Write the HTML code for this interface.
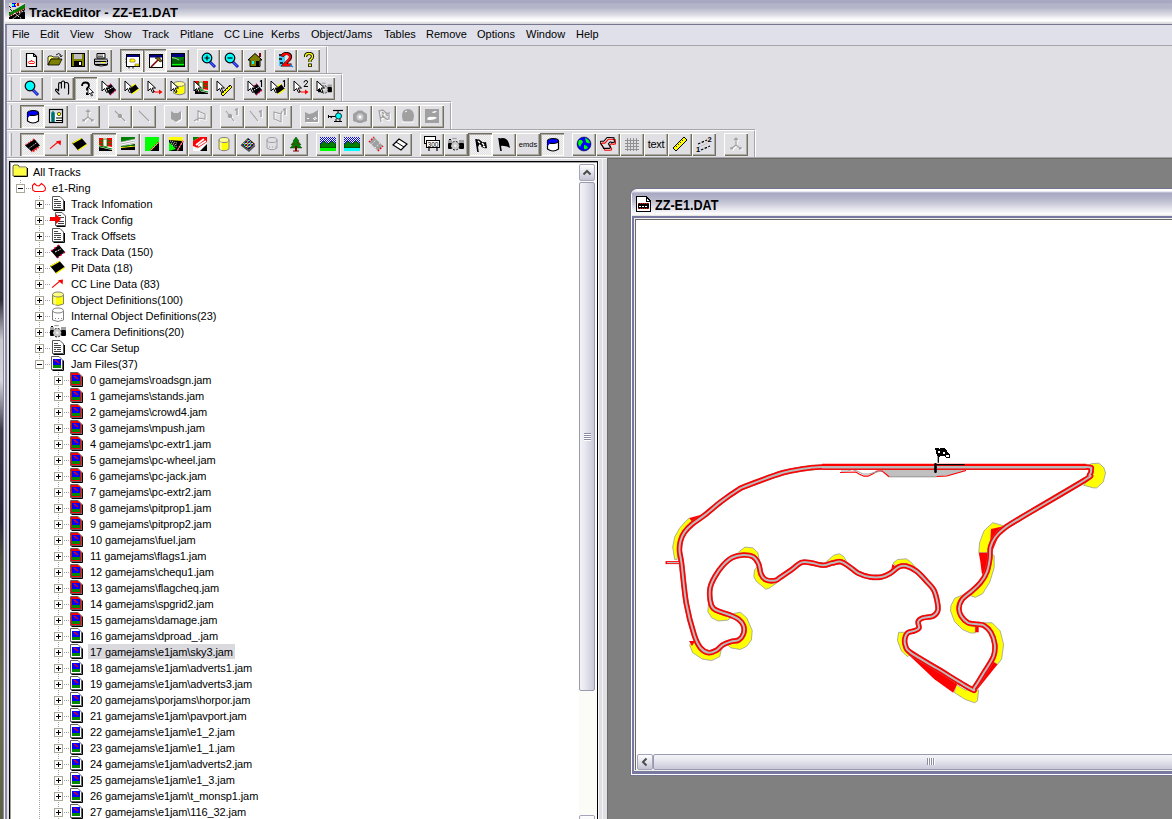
<!DOCTYPE html><html><head><meta charset="utf-8"><style>
*{margin:0;padding:0;box-sizing:border-box}
html,body{width:1172px;height:819px;overflow:hidden;background:#e0dfe3;font-family:'Liberation Sans', sans-serif;font-size:11px;color:#000}
.a{position:absolute}
.btn{position:absolute;box-shadow:inset 1px 1px #fffff6,inset -1px -1px #716f64,inset -2px -2px #aca9a0}
.btn svg{position:absolute;left:4px;top:3px}
.prs{position:absolute;box-shadow:inset 1px 1px #716f64,inset 2px 2px #aca9a0,inset -1px -1px #fffff6;background-color:#f4f4f2;background-image:linear-gradient(45deg,#e0dfe3 25%,transparent 25%,transparent 75%,#e0dfe3 75%),linear-gradient(45deg,#e0dfe3 25%,transparent 25%,transparent 75%,#e0dfe3 75%);background-size:2px 2px;background-position:0 0,1px 1px}
.prs svg{position:absolute;left:5px;top:4px}
.grip{position:absolute;width:3px;box-shadow:inset 1px 1px #fff,inset -1px -1px #a0a0a0}
.band{position:absolute;box-shadow:inset -1px 0 #a0a0a0, inset -2px 0 #fff}
.menu span{position:absolute;top:3px;white-space:nowrap}
.tree div{position:absolute;white-space:nowrap;height:16px;line-height:16px}
</style></head><body><div class="a" style="left:0;top:0;width:3px;height:819px;background:linear-gradient(#55585c 0,#3c4044 120px,#2a2e33 300px,#c9c9cc 340px,#d8d8dc 380px,#3b3c48 430px,#242633 520px,#4c5036 560px,#6c6e4a 700px,#5e6140 819px)"></div><div class="a" style="left:3px;top:0;width:1169px;height:819px;background:#8a8aa8"></div><div class="a" style="left:4px;top:0;width:1px;height:819px;background:#f4f4f8"></div><div class="a" style="left:5px;top:0;width:1167px;height:24px;background:linear-gradient(#aaa8c2 0,#a7a6c0 2px,#b2b2c8 4px,#b6b6ca 8px,#c6c8d5 11px,#dcdce4 15px,#f4f4f8 18px,#fff 20px,#fff 21px,#d8d8dc 23px)"></div><div class="a" style="left:5px;top:24px;width:1167px;height:1px;background:#77768f"></div><div class="a" style="left:9px;top:3px;width:16px;height:16px;overflow:hidden"><svg width="16" height="16" viewBox="0 0 16 16"><rect width="16" height="16" fill="#000"/><path d="M0 0 H16 V1 L0 11 Z" fill="#d8d8d8"/><path d="M0 3 L2 5 M1 6 L3 8 M0 9 L1 10 M4 7 L5 8" stroke="#000" stroke-width="0.9"/><rect x="3" y="0" width="4" height="4" fill="#0000ff"/><rect x="3" y="1" width="2" height="2" fill="#00ffff"/><rect x="6" y="1" width="3" height="1.5" fill="#ffff00"/><rect x="8" y="0" width="2" height="3" fill="#ff0000"/><rect x="1" y="0" width="1" height="1" fill="#ff0"/><path d="M0 10 L16 1 V5 L0 13 Z" fill="#008000"/><path d="M0 13.5 L16 5.5" stroke="#fff" stroke-width="1.1" stroke-dasharray="1 1.2"/><path d="M0 13.5 L16 5.5" stroke="#f00" stroke-width="1.1" stroke-dasharray="1 1.2" stroke-dashoffset="1.1"/><path d="M3.5 16 L12 10 M5 10 L13 16 M10 9.5 L16 8" stroke="#fff" stroke-width="1" stroke-dasharray="1.5 1"/></svg></div><div class="a" style="left:29px;top:5px;font:bold 13.5px 'Liberation Sans', sans-serif;color:#000;white-space:nowrap;transform:scaleX(0.965);transform-origin:0 0">TrackEditor - ZZ-E1.DAT</div><div class="a" style="left:7px;top:25px;width:1165px;height:20px;background:#dfe0ea"></div><div class="a" style="left:7px;top:45px;width:1165px;height:1px;background:#a7a6aa"></div><div class="a" style="left:7px;top:46px;width:1165px;height:1px;background:#fff"></div><div class="a menu" style="left:0;top:25px;width:1172px;height:20px"><span style="left:12px">File</span><span style="left:40px">Edit</span><span style="left:70px">View</span><span style="left:104px">Show</span><span style="left:142px">Track</span><span style="left:180px">Pitlane</span><span style="left:224px">CC Line</span><span style="left:271px">Kerbs</span><span style="left:311px">Object/Jams</span><span style="left:384px">Tables</span><span style="left:426px">Remove</span><span style="left:477px">Options</span><span style="left:526px">Window</span><span style="left:576px">Help</span></div><div class="a" style="left:7px;top:46px;width:1165px;height:112px;background:#e0dfe3"></div><div class="a" style="left:7px;top:45px;width:320px;height:1px;background:#a7a6aa"></div><div class="a" style="left:7px;top:46px;width:319px;height:1px;background:#fff"></div><div class="a" style="left:326px;top:47px;width:1px;height:26px;background:#a7a6aa"></div><div class="a" style="left:327px;top:46px;width:1px;height:27px;background:#fff"></div><div class="a" style="left:9px;top:49px;width:1px;height:23px;background:#fff"></div><div class="a" style="left:11px;top:49px;width:1px;height:23px;background:#a7a6aa"></div><div class="btn" style="left:20px;top:49px;width:23px;height:23px"><svg width="16" height="16" viewBox="0 0 16 16"><path d="M2.5 1.5 H9.5 L12.5 4.5 V14.5 H2.5 Z" fill="#fff" stroke="#000" stroke-width="1.2"/><path d="M9.5 1.5 V4.5 H12.5" fill="none" stroke="#000"/><path d="M4.5 10.5 L5.5 9 L6.5 10 L7.5 8 L8.5 10 L9.5 9 L10.5 10.5 L10 11.5 H5 Z" fill="none" stroke="#f00" stroke-width="0.9"/></svg></div><div class="btn" style="left:43px;top:49px;width:23px;height:23px"><svg width="16" height="16" viewBox="0 0 16 16"><path d="M1 5 L2 4 L5 4 L6 5 L12 5 L12 7 L4 7 L1 13 Z" fill="#ffff80" stroke="#000" stroke-width="0.8"/><path d="M4 7 L15 7 L12 13 L1 13 Z" fill="#808000" stroke="#000" stroke-width="0.8"/><path d="M9 3 Q12 0 14 3 L14 4" fill="none" stroke="#000" stroke-width="0.9"/><path d="M12.5 3.5 L14 5 L15.5 3.5" fill="none" stroke="#000" stroke-width="0.8"/></svg></div><div class="btn" style="left:66px;top:49px;width:23px;height:23px"><svg width="16" height="16" viewBox="0 0 16 16"><rect x="1.5" y="1.5" width="13" height="13" fill="#808000" stroke="#000"/><rect x="4" y="2" width="8" height="5" fill="#c0c0c0"/><rect x="4" y="9" width="8" height="5.5" fill="#000"/><rect x="9" y="10" width="2" height="3" fill="#fff"/></svg></div><div class="btn" style="left:89px;top:49px;width:23px;height:23px"><svg width="16" height="16" viewBox="0 0 16 16"><path d="M4 1.5 H12 V6 H4 Z" fill="#fff" stroke="#000"/><path d="M5 3 H10 M5 4.5 H10" stroke="#000" stroke-width="0.6"/><path d="M1.5 7 H14.5 V12.5 H1.5 Z" fill="#c0c0c0" stroke="#000"/><path d="M1.5 9.5 H14.5" stroke="#000"/><rect x="8" y="10" width="4" height="1" fill="#ff0"/><path d="M2 13 Q8 15 14.5 13" fill="none" stroke="#000"/><path d="M13 6 L15 8 M13 9 L15 11" stroke="#808080"/></svg></div><div class="prs" style="left:120px;top:49px;width:23px;height:23px"><svg width="16" height="16" viewBox="0 0 16 16"><rect x="1.5" y="1.5" width="13" height="12" fill="#fff" stroke="#000"/><rect x="2" y="2" width="12" height="2" fill="#000080"/><path d="M5 6 H9 L10 7 V9 H5 Z" fill="#ff0" stroke="#806000" stroke-width="0.6"/><path d="M10 11 H14 V13 H10 Z" fill="#ff0" stroke="#806000" stroke-width="0.6"/><path d="M0.5 6 H2 M0.5 9 H2 M4 13.5 V15.5 M8 13.5 V15.5" stroke="#000"/></svg></div><div class="prs" style="left:143px;top:49px;width:23px;height:23px"><svg width="16" height="16" viewBox="0 0 16 16"><rect x="1.5" y="1.5" width="13" height="13" fill="#fff" stroke="#000"/><rect x="2" y="2" width="12" height="2.5" fill="#000080"/><path d="M3 14 L10 7" stroke="#800000" stroke-width="1.6"/><path d="M7 5 L11 4 L14 8 L12 9 L10 7 Z" fill="#806000" stroke="#000" stroke-width="0.6"/></svg></div><div class="btn" style="left:166px;top:49px;width:23px;height:23px"><svg width="16" height="16" viewBox="0 0 16 16"><rect x="1.5" y="1.5" width="13" height="13" fill="#008000" stroke="#000"/><rect x="2" y="2" width="12" height="3" fill="#000080"/><path d="M2 8 L6 6 L10 9 L14 6 V14 H2 Z" fill="#006000"/><path d="M2 12.5 H14" stroke="#00ff00" stroke-width="1.2"/><path d="M2 5.5 L6 6.5 L9 8" stroke="#fff" stroke-width="0.7"/></svg></div><div class="btn" style="left:197px;top:49px;width:23px;height:23px"><svg width="16" height="16" viewBox="0 0 16 16"><path d="M8.5 9.5 L14 15" stroke="#0000a0" stroke-width="2.8"/><path d="M8.5 9.5 L13.5 14.5" stroke="#4060ff" stroke-width="1.4"/><circle cx="6" cy="6" r="4.8" fill="#00ffff" stroke="#000" stroke-width="1.2"/><path d="M3.5 6 H8.5 M6 3.5 V8.5" stroke="#000" stroke-width="1.2"/></svg></div><div class="btn" style="left:220px;top:49px;width:23px;height:23px"><svg width="16" height="16" viewBox="0 0 16 16"><path d="M8.5 9.5 L14 15" stroke="#0000a0" stroke-width="2.8"/><path d="M8.5 9.5 L13.5 14.5" stroke="#4060ff" stroke-width="1.4"/><circle cx="6" cy="6" r="4.8" fill="#00ffff" stroke="#000" stroke-width="1.2"/><path d="M3.5 6 H8.5" stroke="#000" stroke-width="1.2"/></svg></div><div class="btn" style="left:243px;top:49px;width:23px;height:23px"><svg width="16" height="16" viewBox="0 0 16 16"><path d="M8 1.5 L15 8 H13 V14.5 H3 V8 H1 Z" fill="#808000" stroke="#000"/><rect x="12" y="1" width="2" height="4" fill="#800000"/><rect x="5" y="9" width="2" height="3" fill="#00ffff"/><rect x="9" y="9" width="3" height="5" fill="#000"/></svg></div><div class="btn" style="left:274px;top:49px;width:23px;height:23px"><svg width="16" height="16" viewBox="0 0 16 16"><rect x="1" y="2" width="6" height="12" fill="#00c0ff" opacity="0.7"/><path d="M1 3 L4 3 M1 7 L4 7 M2 11 L5 11" stroke="#000" stroke-width="1.5"/><path d="M4 4.5 Q5 1 9.5 1.5 Q14 2.5 12 7 L6 13 H13.5" fill="none" stroke="#000" stroke-width="3"/><path d="M4 4.5 Q5 1.5 9.5 2 Q13 3 11.5 7 L6 13 H13" fill="none" stroke="#f00" stroke-width="2.2"/><path d="M12 13 L15 15" stroke="#0080ff" stroke-width="1.3"/></svg></div><div class="btn" style="left:297px;top:49px;width:23px;height:23px"><svg width="16" height="16" viewBox="0 0 16 16"><path d="M4.5 5 Q4.5 1.5 8 1.5 Q11.5 1.5 11.5 4.5 Q11.5 6.5 9 8 V10" fill="none" stroke="#000" stroke-width="3.2"/><path d="M4.5 5 Q4.5 1.5 8 1.5 Q11.5 1.5 11.5 4.5 Q11.5 6.5 9 8 V10" fill="none" stroke="#ff0" stroke-width="1.4"/><rect x="7.2" y="11.5" width="3.6" height="3.5" fill="#000"/><rect x="8" y="12.3" width="2" height="2" fill="#ff0"/></svg></div><div class="a" style="left:7px;top:73px;width:335px;height:1px;background:#a7a6aa"></div><div class="a" style="left:7px;top:74px;width:334px;height:1px;background:#fff"></div><div class="a" style="left:341px;top:75px;width:1px;height:26px;background:#a7a6aa"></div><div class="a" style="left:342px;top:74px;width:1px;height:27px;background:#fff"></div><div class="a" style="left:9px;top:77px;width:1px;height:23px;background:#fff"></div><div class="a" style="left:11px;top:77px;width:1px;height:23px;background:#a7a6aa"></div><div class="btn" style="left:20px;top:77px;width:23px;height:23px"><svg width="16" height="16" viewBox="0 0 16 16"><path d="M8.5 9.5 L14 15" stroke="#0000a0" stroke-width="2.8"/><path d="M8.5 9.5 L13.5 14.5" stroke="#4060ff" stroke-width="1.4"/><circle cx="6" cy="6" r="4.8" fill="#00ffff" stroke="#000" stroke-width="1.2"/></svg></div><div class="btn" style="left:51px;top:77px;width:23px;height:23px"><svg width="16" height="16" viewBox="0 0 16 16"><path d="M4.5 14.5 L0.8 10.8 Q0 9.8 1.3 9 L3.6 10.8 V4 Q3.6 2.6 5 2.6 Q6.4 2.6 6.4 4 V2.4 Q6.8 1 8.2 1 Q9.6 1 9.6 2.4 V3 Q10.6 2.2 11.8 2.6 Q13.6 3.2 13.6 5 V13.5 L13 14.5 M6.4 4 V8.5 M9.6 3 V8.5 M3.6 4 V9" fill="none" stroke="#000" stroke-width="1.1" stroke-linejoin="round"/></svg></div><div class="prs" style="left:74px;top:77px;width:23px;height:23px"><svg width="16" height="16" viewBox="0 0 16 16"><path d="M3 5 Q3 1.5 6.5 1.5 Q10 1.5 10 4.5 Q10 6 8 7.5 V9.5" fill="none" stroke="#000" stroke-width="1.8"/><rect x="7" y="11.5" width="2" height="2.5" fill="#000"/><path d="M9 6 L9 14 L11 12 L12.5 15 L13.5 14.5 L12.3 11.5 L14.5 11.5 Z" fill="#fff" stroke="#000" stroke-width="0.8"/></svg></div><div class="btn" style="left:97px;top:77px;width:23px;height:23px"><svg width="16" height="16" viewBox="0 0 16 16"><path d="M4 8 L10 4 L15 10 L9 15 Z" fill="#000"/><path d="M4 8 L10 4" stroke="#f00" stroke-width="1.6" stroke-dasharray="1.5 1.5"/><path d="M9 15 L15 10" stroke="#f00" stroke-width="1.6" stroke-dasharray="1.5 1.5"/><path d="M4.5 8.5 L10 4.5 M9 14.5 L14.5 10" stroke="#00f" stroke-width="1" stroke-dasharray="1 2"/><path d="M7 10 L12 7" stroke="#fff" stroke-dasharray="1.5 1"/><path d="M1 1 L1 11 L3.5 8.5 L5.5 12.5 L7 12 L5.2 8 L8.5 8 Z" fill="#fff" stroke="#000" stroke-width="1" stroke-linejoin="round"/></svg></div><div class="btn" style="left:120px;top:77px;width:23px;height:23px"><svg width="16" height="16" viewBox="0 0 16 16"><path d="M4 9 L11 4 L15 9 L8 14 Z" fill="#000"/><path d="M4 9 L11 4 M8 14 L15 9" stroke="#ff0" stroke-width="1.5"/><path d="M1 1 L1 11 L3.5 8.5 L5.5 12.5 L7 12 L5.2 8 L8.5 8 Z" fill="#fff" stroke="#000" stroke-width="1" stroke-linejoin="round"/></svg></div><div class="btn" style="left:143px;top:77px;width:23px;height:23px"><svg width="16" height="16" viewBox="0 0 16 16"><path d="M4 9 L8 12 H13" fill="none" stroke="#f00" stroke-width="1.2"/><path d="M12 9.5 L15.5 12 L12 14.5 Z" fill="#f00"/><path d="M1 1 L1 11 L3.5 8.5 L5.5 12.5 L7 12 L5.2 8 L8.5 8 Z" fill="#fff" stroke="#000" stroke-width="1" stroke-linejoin="round"/></svg></div><div class="btn" style="left:166px;top:77px;width:23px;height:23px"><svg width="16" height="16" viewBox="0 0 16 16"><path d="M3.5 4 V13 Q9.5 16.5 15 13 V4" fill="#ff0" stroke="#808080"/><ellipse cx="9.25" cy="4" rx="5.75" ry="2.5" fill="#ffff90" stroke="#808080"/><path d="M1 1 L1 11 L3.5 8.5 L5.5 12.5 L7 12 L5.2 8 L8.5 8 Z" fill="#fff" stroke="#000" stroke-width="1" stroke-linejoin="round"/></svg></div><div class="btn" style="left:189px;top:77px;width:23px;height:23px"><svg width="16" height="16" viewBox="0 0 16 16"><rect x="2" y="1" width="13" height="13" fill="#fff"/><path d="M2 1 L6 1 L6 10 L2 8 Z" fill="#f00"/><path d="M10 1 L15 1 L15 10 L10 9 Z" fill="#f00"/><path d="M2 4 L6 4 M10 4 L15 4 M2 7 L6 7 M10 7 L15 7" stroke="#008000"/><path d="M6 2 L10 2 L10 10 L6 9 Z" fill="#fff" stroke="#008000" stroke-width="0.8"/><path d="M2 10 L15 13 V14 H2 Z" fill="#000"/><path d="M2 9 L15 12" stroke="#008000"/><path d="M1 1 L1 11 L3.5 8.5 L5.5 12.5 L7 12 L5.2 8 L8.5 8 Z" fill="#fff" stroke="#000" stroke-width="1" stroke-linejoin="round"/></svg></div><div class="btn" style="left:212px;top:77px;width:23px;height:23px"><svg width="16" height="16" viewBox="0 0 16 16"><path d="M5 14 L14 5 L16 7 L7 16 Z" fill="#ff0" stroke="#000" stroke-width="0.9"/><path d="M7 12 L8 13 M9 10 L10 11 M11 8 L12 9 M13 6 L14 7" stroke="#000" stroke-width="0.7"/><path d="M1 1 L1 11 L3.5 8.5 L5.5 12.5 L7 12 L5.2 8 L8.5 8 Z" fill="#fff" stroke="#000" stroke-width="1" stroke-linejoin="round"/></svg></div><div class="btn" style="left:243px;top:77px;width:23px;height:23px"><svg width="16" height="16" viewBox="0 0 16 16"><path d="M4 8 L10 4 L15 10 L9 15 Z" fill="#000"/><path d="M4 8 L10 4" stroke="#f00" stroke-width="1.6" stroke-dasharray="1.5 1.5"/><path d="M9 15 L15 10" stroke="#f00" stroke-width="1.6" stroke-dasharray="1.5 1.5"/><path d="M4.5 8.5 L10 4.5 M9 14.5 L14.5 10" stroke="#00f" stroke-width="1" stroke-dasharray="1 2"/><path d="M7 10 L12 7" stroke="#fff" stroke-dasharray="1.5 1"/><path d="M13 1.5 L14.5 0.5 V7" fill="none" stroke="#000" stroke-width="1.1"/><path d="M1 1 L1 11 L3.5 8.5 L5.5 12.5 L7 12 L5.2 8 L8.5 8 Z" fill="#fff" stroke="#000" stroke-width="1" stroke-linejoin="round"/></svg></div><div class="btn" style="left:266px;top:77px;width:23px;height:23px"><svg width="16" height="16" viewBox="0 0 16 16"><path d="M4 9 L11 4 L15 9 L8 14 Z" fill="#000"/><path d="M4 9 L11 4 M8 14 L15 9" stroke="#ff0" stroke-width="1.5"/><path d="M13 1.5 L14.5 0.5 V7" fill="none" stroke="#000" stroke-width="1.1"/><path d="M1 1 L1 11 L3.5 8.5 L5.5 12.5 L7 12 L5.2 8 L8.5 8 Z" fill="#fff" stroke="#000" stroke-width="1" stroke-linejoin="round"/></svg></div><div class="btn" style="left:289px;top:77px;width:23px;height:23px"><svg width="16" height="16" viewBox="0 0 16 16"><path d="M4 9 L8 12 H13" fill="none" stroke="#f00" stroke-width="1.2"/><path d="M12 9.5 L15.5 12 L12 14.5 Z" fill="#f00"/><path d="M11 2.5 Q11 0.5 13 0.5 Q15 0.5 14.5 2.5 L11 6.5 H15" fill="none" stroke="#000" stroke-width="1"/><path d="M1 1 L1 11 L3.5 8.5 L5.5 12.5 L7 12 L5.2 8 L8.5 8 Z" fill="#fff" stroke="#000" stroke-width="1" stroke-linejoin="round"/></svg></div><div class="btn" style="left:312px;top:77px;width:23px;height:23px"><svg width="16" height="16" viewBox="0 0 16 16"><g transform="translate(2,1) scale(0.87)"><rect x="0" y="4.2" width="4" height="3" fill="#a0a0a0"/><rect x="11" y="4" width="5" height="3" fill="#a0a0a0"/><rect x="0" y="7" width="4" height="6" rx="1" fill="#000"/><rect x="11" y="7" width="5" height="6" rx="1" fill="#000"/><rect x="4.3" y="1.9" width="4.4" height="1.3" fill="#a0a0a0"/><rect x="1" y="3" width="2" height="1" fill="#000"/><circle cx="7.2" cy="9.7" r="4.3" fill="#c8c8c8" stroke="#000" stroke-width="0.9" stroke-dasharray="2 1.4"/><circle cx="7.2" cy="9.7" r="1.3" fill="#f0f0f0"/></g><path d="M1 1 L1 11 L3.5 8.5 L5.5 12.5 L7 12 L5.2 8 L8.5 8 Z" fill="#fff" stroke="#000" stroke-width="1" stroke-linejoin="round"/></svg></div><div class="a" style="left:7px;top:101px;width:444px;height:1px;background:#a7a6aa"></div><div class="a" style="left:7px;top:102px;width:443px;height:1px;background:#fff"></div><div class="a" style="left:450px;top:103px;width:1px;height:26px;background:#a7a6aa"></div><div class="a" style="left:451px;top:102px;width:1px;height:27px;background:#fff"></div><div class="a" style="left:9px;top:105px;width:1px;height:23px;background:#fff"></div><div class="a" style="left:11px;top:105px;width:1px;height:23px;background:#a7a6aa"></div><div class="prs" style="left:20px;top:105px;width:24px;height:23px"><svg width="16" height="16" viewBox="0 0 16 16"><path d="M2.5 4 V12 Q8 16 13.5 12 V4" fill="#fff" stroke="#000" stroke-width="1.2"/><ellipse cx="8" cy="4" rx="5.5" ry="2.5" fill="#0000ff" stroke="#000" stroke-width="1.2"/><path d="M2.5 4 V9 Q4 8 5 6" fill="#0000ff" stroke="none"/></svg></div><div class="btn" style="left:44px;top:105px;width:24px;height:23px"><svg width="16" height="16" viewBox="0 0 16 16"><rect x="1.5" y="1.5" width="13" height="13" fill="#fff" stroke="#000" stroke-width="1.2"/><path d="M2 3 H14 M2 5 H14" stroke="#808080" stroke-width="0.5"/><path d="M4 14 V5 L5 4 L6 5 V14 M3 8 H7" stroke="#008080" stroke-width="1.6"/><circle cx="11" cy="6" r="1.7" fill="#ff0" stroke="#000" stroke-width="0.6"/><path d="M8 10 H14 M8 12.5 H14" stroke="#000" stroke-width="1"/></svg></div><div class="btn" style="left:76px;top:105px;width:24px;height:23px"><svg width="16" height="16" viewBox="0 0 16 16"><g transform="translate(1,1)" fill="none" stroke="#fff"><path d="M8 2 V9 L3 13 M8 9 L13 13 M6 4 L8 2 L10 4 M3 11 V13 H5 M11 13 H13 V11" stroke="#fff" stroke-width="1.2"/></g><g fill="none" stroke="#a0a0a0"><path d="M8 2 V9 L3 13 M8 9 L13 13 M6 4 L8 2 L10 4 M3 11 V13 H5 M11 13 H13 V11" stroke="#a0a0a0" stroke-width="1.2"/></g></svg></div><div class="btn" style="left:108px;top:105px;width:24px;height:23px"><svg width="16" height="16" viewBox="0 0 16 16"><g transform="translate(1,1)" fill="none" stroke="#fff"><path d="M3 3 L13 13" stroke="#fff" stroke-width="1.1"/><circle cx="8" cy="8" r="1.8" fill="#fff" stroke="#fff"/></g><g fill="none" stroke="#a0a0a0"><path d="M3 3 L13 13" stroke="#a0a0a0" stroke-width="1.1"/><circle cx="8" cy="8" r="1.8" fill="#a0a0a0" stroke="#a0a0a0"/></g></svg></div><div class="btn" style="left:132px;top:105px;width:24px;height:23px"><svg width="16" height="16" viewBox="0 0 16 16"><g transform="translate(1,1)" fill="none" stroke="#fff"><path d="M3 3 L13 13" stroke="#fff" stroke-width="1.1"/></g><g fill="none" stroke="#a0a0a0"><path d="M3 3 L13 13" stroke="#a0a0a0" stroke-width="1.1"/></g></svg></div><div class="btn" style="left:164px;top:105px;width:24px;height:23px"><svg width="16" height="16" viewBox="0 0 16 16"><path d="M3 3 L6 5 L10 5 L13 3 V11 L8 14 L3 11 Z" fill="#fff" transform="translate(1,1)"/><path d="M3 3 L6 5 L10 5 L13 3 V11 L8 14 L3 11 Z" fill="#a0a0a0"/></svg></div><div class="btn" style="left:188px;top:105px;width:24px;height:23px"><svg width="16" height="16" viewBox="0 0 16 16"><g transform="translate(1,1)" fill="none" stroke="#fff"><path d="M2 13 L7 10 M6 2 V13 M6 3 L13 6 L13 11 L6 10" stroke="#fff" stroke-width="1.1"/></g><g fill="none" stroke="#a0a0a0"><path d="M2 13 L7 10 M6 2 V13 M6 3 L13 6 L13 11 L6 10" stroke="#a0a0a0" stroke-width="1.1"/></g></svg></div><div class="btn" style="left:220px;top:105px;width:24px;height:23px"><svg width="16" height="16" viewBox="0 0 16 16"><g transform="translate(1,1)" fill="none" stroke="#fff"><path d="M2 3 L10 13" stroke="#fff" stroke-width="1.1"/><circle cx="6" cy="8" r="1.8" fill="#fff" stroke="#fff"/><path d="M11 2 L13 1 V7" stroke="#fff" stroke-width="1.5"/></g><g fill="none" stroke="#a0a0a0"><path d="M2 3 L10 13" stroke="#a0a0a0" stroke-width="1.1"/><circle cx="6" cy="8" r="1.8" fill="#a0a0a0" stroke="#a0a0a0"/><path d="M11 2 L13 1 V7" stroke="#a0a0a0" stroke-width="1.5"/></g></svg></div><div class="btn" style="left:244px;top:105px;width:24px;height:23px"><svg width="16" height="16" viewBox="0 0 16 16"><g transform="translate(1,1)" fill="none" stroke="#fff"><path d="M2 3 L10 13" stroke="#fff" stroke-width="1.1"/><path d="M11 4 L13 3 V9" stroke="#fff" stroke-width="1.5"/></g><g fill="none" stroke="#a0a0a0"><path d="M2 3 L10 13" stroke="#a0a0a0" stroke-width="1.1"/><path d="M11 4 L13 3 V9" stroke="#a0a0a0" stroke-width="1.5"/></g></svg></div><div class="btn" style="left:268px;top:105px;width:24px;height:23px"><svg width="16" height="16" viewBox="0 0 16 16"><g transform="translate(1,1)" fill="none" stroke="#fff"><path d="M2 4 L9 6 V14 L2 11 Z M9 6 L10 3" stroke="#fff" stroke-width="1.1"/><path d="M11 2 L13 1 V7" stroke="#fff" stroke-width="1.5"/></g><g fill="none" stroke="#a0a0a0"><path d="M2 4 L9 6 V14 L2 11 Z M9 6 L10 3" stroke="#a0a0a0" stroke-width="1.1"/><path d="M11 2 L13 1 V7" stroke="#a0a0a0" stroke-width="1.5"/></g></svg></div><div class="btn" style="left:300px;top:105px;width:24px;height:23px"><svg width="16" height="16" viewBox="0 0 16 16"><path d="M1 4 L1 14 H14 V2 L9 5 L5 6 Z" fill="#fff" transform="translate(1,1)"/><path d="M1 4 L1 14 H14 V2 L9 5 L5 6 Z" fill="#a0a0a0"/><path d="M9 11 L12 9 M10 12 L13 10" stroke="#fff"/><rect x="3" y="10" width="2" height="1" fill="#fff"/></svg></div><div class="btn" style="left:324px;top:105px;width:24px;height:23px"><svg width="16" height="16" viewBox="0 0 16 16"><path d="M5 2.5 H15" stroke="#000" stroke-width="1.2"/><path d="M10 2.5 V5" stroke="#000"/><circle cx="10.5" cy="8" r="3" fill="#00ffff" stroke="#000" stroke-width="0.8"/><path d="M0.5 7 V10 M0.5 8.5 H7.5 M2 8.5 L4 10" stroke="#000" stroke-width="1"/><path d="M8 11 V13 M12 11 V13 M6 13.5 H14" stroke="#000" stroke-width="1"/></svg></div><div class="btn" style="left:348px;top:105px;width:24px;height:23px"><svg width="16" height="16" viewBox="0 0 16 16"><g opacity="1"><path d="M1 6 L4 4 L6 2.5 H10 L12 4 L15 6 V13 L12 14 L9.5 15 H6.5 L4 14 L1 13 Z" fill="#a0a0a0"/><circle cx="8" cy="9" r="3.5" fill="#c8c8c8"/><circle cx="8" cy="9" r="1.5" fill="#fff"/></g></svg></div><div class="btn" style="left:372px;top:105px;width:24px;height:23px"><svg width="16" height="16" viewBox="0 0 16 16"><g transform="translate(1,1)" fill="none" stroke="#fff"><path d="M3 2 L5 14 M4 3 Q7 1 9 4 Q11 6 13 5 L13 11 Q11 12 9 10 Q7 8 5 10" stroke="#fff" stroke-width="1.3"/><path d="M6 4 L8 6 M10 6 L12 8 M6 7 L8 9" stroke="#fff" stroke-width="1.5"/></g><g fill="none" stroke="#a0a0a0"><path d="M3 2 L5 14 M4 3 Q7 1 9 4 Q11 6 13 5 L13 11 Q11 12 9 10 Q7 8 5 10" stroke="#a0a0a0" stroke-width="1.3"/><path d="M6 4 L8 6 M10 6 L12 8 M6 7 L8 9" stroke="#a0a0a0" stroke-width="1.5"/></g></svg></div><div class="btn" style="left:396px;top:105px;width:24px;height:23px"><svg width="16" height="16" viewBox="0 0 16 16"><path d="M8 1 Q13 1 14 7 Q14 12 12 14 H4 Q2 12 2 8 Q2 1 8 1 Z" fill="#a0a0a0"/><path d="M5 4 L7 3" stroke="#fff"/><path d="M2 14 H14" stroke="#fff"/></svg></div><div class="btn" style="left:420px;top:105px;width:24px;height:23px"><svg width="16" height="16" viewBox="0 0 16 16"><rect x="1" y="1" width="14" height="14" fill="#a0a0a0"/><path d="M8 4 Q10 3 13 3 Q12 5 9 5 Z" fill="#fff"/><path d="M3 11 Q4 8 8 9 Q11 8 13 10 Q10 12 6 12 Q3 12 3 11 Z" fill="#fff"/></svg></div><div class="a" style="left:7px;top:129px;width:748px;height:1px;background:#a7a6aa"></div><div class="a" style="left:7px;top:130px;width:747px;height:1px;background:#fff"></div><div class="a" style="left:754px;top:131px;width:1px;height:26px;background:#a7a6aa"></div><div class="a" style="left:755px;top:130px;width:1px;height:27px;background:#fff"></div><div class="a" style="left:9px;top:133px;width:1px;height:23px;background:#fff"></div><div class="a" style="left:11px;top:133px;width:1px;height:23px;background:#a7a6aa"></div><div class="prs" style="left:20px;top:133px;width:24px;height:23px"><svg width="16" height="16" viewBox="0 0 16 16"><path d="M0 8.6 L9.6 2.3 L15 8.6 L6.3 14.3 Z" fill="#000"/><path d="M0 8.6 L1 6.5 L2.5 7.5 L3 5 L4.5 6 L5.5 3.5 L7 4.5 L8 1.5 L9.6 2.3 Z M6.3 14.3 L6 15.5 L8 14 L9 15.5 L10 12.5 L11.5 13.5 L12 11 L13.5 11.5 L14 9 L15 8.6 Z" fill="#f00"/><path d="M4.5 11 L12 5.5" stroke="#fff" stroke-width="1" stroke-dasharray="1.2 1.2"/></svg></div><div class="btn" style="left:44px;top:133px;width:24px;height:23px"><svg width="16" height="16" viewBox="0 0 16 16"><path d="M2 12.6 L10 6" stroke="#f00" stroke-width="1.1"/><path d="M8 5.3 L13 4.5 L12.6 9.5 Z" fill="#f00"/></svg></div><div class="btn" style="left:68px;top:133px;width:24px;height:23px"><svg width="16" height="16" viewBox="0 0 16 16"><path d="M0 7 L9.5 2 L15 8.3 L6.2 14.6 Z" fill="#000"/><path d="M0.5 7.2 L9.5 2.2 M6.2 14.2 L14.7 8.5" stroke="#ff0" stroke-width="1.3"/></svg></div><div class="prs" style="left:92px;top:133px;width:24px;height:23px"><svg width="16" height="16" viewBox="0 0 16 16"><rect x="2" y="1" width="13" height="13" fill="#fff"/><path d="M2 1 L6 1 L6 10 L2 8 Z" fill="#f00"/><path d="M10 1 L15 1 L15 10 L10 9 Z" fill="#f00"/><path d="M2 4 L6 4 M10 4 L15 4 M2 7 L6 7 M10 7 L15 7" stroke="#008000"/><path d="M6 2 L10 2 L10 10 L6 9 Z" fill="#fff" stroke="#008000" stroke-width="0.8"/><path d="M2 10 L15 13 V14 H2 Z" fill="#000"/><path d="M2 9 L15 12" stroke="#008000"/></svg></div><div class="btn" style="left:116px;top:133px;width:24px;height:23px"><svg width="16" height="16" viewBox="0 0 16 16"><rect x="1" y="1" width="14" height="13" fill="#fff"/><path d="M1 1 H15 V3 L1 6 Z" fill="#008000"/><path d="M1 6 L15 3 M1 8 L15 5 M1 10 L15 7" stroke="#a0a0a0" stroke-width="0.8"/><path d="M1 11 L15 8 V14 H1 Z" fill="#000"/><path d="M1 11.5 L15 10" stroke="#ff0" stroke-width="1"/><path d="M1 10.5 L15 9" stroke="#008000"/></svg></div><div class="btn" style="left:140px;top:133px;width:24px;height:23px"><svg width="16" height="16" viewBox="0 0 16 16"><rect x="1" y="1" width="14" height="14" fill="#00ff00"/><path d="M15 6 L15 15 H6 Z" fill="#000"/><path d="M14.5 6.5 L6.5 14.5" stroke="#f00" stroke-width="1.8" stroke-dasharray="1.5 1.5"/><path d="M14.5 6.5 L6.5 14.5" stroke="#fff" stroke-width="0.6"/></svg></div><div class="btn" style="left:164px;top:133px;width:24px;height:23px"><svg width="16" height="16" viewBox="0 0 16 16"><rect x="1" y="1" width="14" height="14" fill="#000"/><path d="M1 1 H15 V5 L1 4 Z" fill="#ff0"/><path d="M1 6 L8 13 L1 15 Z" fill="#00ff00"/><path d="M2 5 L9 7 M3 7 L9 9 M4 9 L9 11" stroke="#fff" stroke-width="0.9" stroke-dasharray="1 1"/><path d="M15 5 L9 15" stroke="#f00" stroke-width="2" stroke-dasharray="1.5 1.5"/><path d="M15 5 L9 15" stroke="#fff" stroke-width="0.6"/></svg></div><div class="btn" style="left:188px;top:133px;width:24px;height:23px"><svg width="16" height="16" viewBox="0 0 16 16"><rect x="1" y="1" width="14" height="14" fill="#fff"/><path d="M1 1 H8 L1 5 Z" fill="#008000"/><path d="M1 5 L8 1 H15 V6 L6 12 L1 10 Z" fill="#f00"/><path d="M4 9 L12 3 M6 10 L14 5" stroke="#fff" stroke-width="1.6"/><path d="M15 8 V15 H8 Z" fill="#000"/><path d="M3 12 L7 12" stroke="#ccc" stroke-dasharray="1 1"/></svg></div><div class="btn" style="left:212px;top:133px;width:24px;height:23px"><svg width="16" height="16" viewBox="0 0 16 16"><path d="M3 4 V13 Q8 16.5 13 13 V4" fill="#ff0" stroke="#808080"/><ellipse cx="8" cy="4" rx="5" ry="2.5" fill="#ffff90" stroke="#808080"/><path d="M5 6 V14" stroke="#fff"/></svg></div><div class="btn" style="left:236px;top:133px;width:24px;height:23px"><svg width="16" height="16" viewBox="0 0 16 16"><defs><pattern id="cdith" width="3" height="3" patternUnits="userSpaceOnUse"><rect width="1" height="1" fill="#f00"/><rect x="1" width="1" height="1" fill="#0f0"/><rect x="2" width="1" height="1" fill="#00f"/><rect y="1" width="1" height="1" fill="#ff0"/><rect x="1" y="1" width="1" height="1" fill="#f0f"/><rect x="2" y="1" width="1" height="1" fill="#0ff"/><rect y="2" width="1" height="1" fill="#00f"/><rect x="1" y="2" width="1" height="1" fill="#f80"/><rect x="2" y="2" width="1" height="1" fill="#0a0"/></pattern></defs><path d="M1 9 L8 2 L15 8 L9 14 Z" fill="#000"/><path d="M2 8.5 L8 3 L14 8 L8.5 13 Z" fill="url(#cdith)"/><path d="M1 9 L9 15 L15 9.5" fill="none" stroke="#505050" stroke-width="1.4"/></svg></div><div class="btn" style="left:260px;top:133px;width:24px;height:23px"><svg width="16" height="16" viewBox="0 0 16 16"><path d="M3 4 V12 Q8 15.5 13 12 V4" fill="none" stroke="#a0a0a0"/><ellipse cx="8" cy="4" rx="5" ry="2.5" fill="none" stroke="#a0a0a0"/><path d="M5 11 H6 M8 11 H9 M11 11 H12" stroke="#a0a0a0"/></svg></div><div class="btn" style="left:284px;top:133px;width:24px;height:23px"><svg width="16" height="16" viewBox="0 0 16 16"><path d="M8 1 L11 5 L10 5 L13 9 L11 9 L14 12 H2 L5 9 L3 9 L6 5 L5 5 Z" fill="#008000" stroke="#004000" stroke-width="0.5"/><rect x="7" y="10" width="2" height="5" fill="#800000"/><path d="M5 15 H11" stroke="#800000"/><circle cx="6" cy="8" r="0.8" fill="#c00000"/><circle cx="10" cy="7" r="0.8" fill="#c00000"/></svg></div><div class="btn" style="left:316px;top:133px;width:24px;height:23px"><svg width="16" height="16" viewBox="0 0 16 16"><defs><pattern id="dith" width="2" height="2" patternUnits="userSpaceOnUse"><rect width="1" height="1" fill="#fff"/><rect x="1" y="1" width="1" height="1" fill="#fff"/></pattern></defs><rect x="0" y="1" width="16" height="7" fill="#0000ff"/><path d="M0 1 H16 V8 H0 Z" fill="url(#dith)"/><path d="M0 9 L4 5 L8 8 L12 5 L16 8 V12 H0 Z" fill="#008000" stroke="#000" stroke-width="0.6"/><rect x="0" y="12" width="16" height="3" fill="#00ff00"/></svg></div><div class="btn" style="left:340px;top:133px;width:24px;height:23px"><svg width="16" height="16" viewBox="0 0 16 16"><rect x="0" y="1" width="16" height="7" fill="#0000ff"/><path d="M0 1 H16 V8 H0 Z" fill="url(#dith)"/><path d="M0 9 L4 5 L8 8 L12 5 L16 8 V12 H0 Z" fill="#008000" stroke="#000" stroke-width="0.6"/><rect x="0" y="12" width="16" height="3" fill="#00ffff"/></svg></div><div class="btn" style="left:364px;top:133px;width:24px;height:23px"><svg width="16" height="16" viewBox="0 0 16 16"><path d="M1 6 L6 1 L15 10 L10 15 Z" fill="#a0a0a0"/><path d="M3.5 8.5 L8 4 M7 12 L12 7" stroke="#fff" stroke-width="0.8" stroke-dasharray="1.5 1.5"/><path d="M1 6 L6 1 M10 15 L15 10" stroke="#f00" stroke-width="1.5" stroke-dasharray="1.5 1.5"/></svg></div><div class="btn" style="left:388px;top:133px;width:24px;height:23px"><svg width="16" height="16" viewBox="0 0 16 16"><path d="M1 9 L7 3 L15 8 L9 14 Z" fill="#fff" stroke="#000" stroke-width="1.2"/><path d="M4 6 L12 11" stroke="#000" stroke-width="1"/></svg></div><div class="btn" style="left:420px;top:133px;width:24px;height:23px"><svg width="16" height="16" viewBox="0 0 16 16"><rect x="0.5" y="0.5" width="11" height="7" fill="#fff" stroke="#000"/><rect x="2.5" y="4.5" width="13" height="7" fill="#fff" stroke="#000"/><text x="9" y="10.5" font-family="Liberation Sans" font-size="6.5" text-anchor="middle" fill="#000">300</text><path d="M5 11.5 V15 M13 11.5 V15" stroke="#000" stroke-width="1.2"/></svg></div><div class="btn" style="left:444px;top:133px;width:24px;height:23px"><svg width="16" height="16" viewBox="0 0 16 16"><rect x="0" y="4.2" width="4" height="3" fill="#a0a0a0"/><rect x="11" y="4" width="5" height="3" fill="#a0a0a0"/><rect x="0" y="7" width="4" height="6" rx="1" fill="#000"/><rect x="11" y="7" width="5" height="6" rx="1" fill="#000"/><rect x="4.3" y="1.9" width="4.4" height="1.3" fill="#a0a0a0"/><rect x="1" y="3" width="2" height="1" fill="#000"/><circle cx="7.2" cy="9.7" r="4.3" fill="#c8c8c8" stroke="#000" stroke-width="0.9" stroke-dasharray="2 1.4"/><circle cx="7.2" cy="9.7" r="1.3" fill="#f0f0f0"/></svg></div><div class="prs" style="left:468px;top:133px;width:24px;height:23px"><svg width="16" height="16" viewBox="0 0 16 16"><path d="M3 2 L5 15" stroke="#000" stroke-width="1.6"/><path d="M3 3 Q6 1 8 4 Q10 6 13 5 L14 11 Q11 12 9 10 Q7 8 4 10 Z" fill="#000"/><path d="M5 4 L7 6 M9 6 L11 8 M6 8 L8 9 M10 9 L12 10" stroke="#fff" stroke-width="1.4"/></svg></div><div class="btn" style="left:492px;top:133px;width:24px;height:23px"><svg width="16" height="16" viewBox="0 0 16 16"><path d="M3 2 L5 15" stroke="#000" stroke-width="1.6"/><path d="M3 3 Q7 1 10 3 Q13 5 14 12 Q11 10 8 10 Q5 9 4 11 Z" fill="#000"/></svg></div><div class="btn" style="left:516px;top:133px;width:24px;height:23px"><svg width="16" height="16" viewBox="0 0 16 16" overflow="visible"><text x="8" y="11" font-family="Liberation Sans" font-size="7.5" text-anchor="middle" fill="#000">emds</text></svg></div><div class="prs" style="left:540px;top:133px;width:24px;height:23px"><svg width="16" height="16" viewBox="0 0 16 16"><path d="M2.5 4 V12 Q8 16 13.5 12 V4" fill="#fff" stroke="#000" stroke-width="1.2"/><ellipse cx="8" cy="4" rx="5.5" ry="2.5" fill="#0000ff" stroke="#000" stroke-width="1.2"/><path d="M2.5 4 V9 Q4 8 5 6" fill="#0000ff" stroke="none"/></svg></div><div class="btn" style="left:572px;top:133px;width:24px;height:23px"><svg width="16" height="16" viewBox="0 0 16 16"><circle cx="8" cy="8" r="7" fill="#0000ff"/><path d="M3 4 Q6 3 7 6 Q5 8 4 11 Q2 9 2 7 Z M9 2 Q13 3 14 7 Q12 8 10 6 Z M8 9 Q11 9 12 12 Q9 14 8 13 Z" fill="#00ff00"/><circle cx="8" cy="8" r="7" fill="none" stroke="#000" stroke-width="0.5"/></svg></div><div class="btn" style="left:596px;top:133px;width:24px;height:23px"><svg width="16" height="16" viewBox="0 0 16 16"><path d="M0 6.6 L0.8 5.3 H3.7 L7.1 1.5 H10.5 L13.9 1.8 L14.6 6 L11.9 6.6 L10.2 5.8 L8.4 7.7 L10.5 11.1 L9.8 12.4 H3.7 L2.3 9.7 Z" fill="none" stroke="#f00" stroke-width="1.1" transform="translate(1.2,1.8)"/><path d="M0 6.6 L0.8 5.3 H3.7 L7.1 1.5 H10.5 L13.9 1.8 L14.6 6 L11.9 6.6 L10.2 5.8 L8.4 7.7 L10.5 11.1 L9.8 12.4 H3.7 L2.3 9.7 Z" fill="none" stroke="#000" stroke-width="1.1"/></svg></div><div class="btn" style="left:620px;top:133px;width:24px;height:23px"><svg width="16" height="16" viewBox="0 0 16 16"><g shape-rendering="crispEdges"><path d="M3.5 2 V15 M6.5 2 V15 M9.5 2 V15 M12.5 2 V15 M1 4.5 H15 M1 7.5 H15 M1 10.5 H15 M1 13.5 H15" stroke="#909090" stroke-width="1"/></g></svg></div><div class="btn" style="left:644px;top:133px;width:24px;height:23px"><svg width="16" height="16" viewBox="0 0 16 16" overflow="visible"><text x="8" y="12" font-family="Liberation Sans" font-size="11" text-anchor="middle" fill="#000" letter-spacing="-0.3">text</text></svg></div><div class="btn" style="left:668px;top:133px;width:24px;height:23px"><svg width="16" height="16" viewBox="0 0 16 16"><path d="M1 12 L12 1 L15 4 L4 15 Z" fill="#ff0" stroke="#000" stroke-width="1"/><path d="M4 10 L5 11 M6 8 L7 9 M8 6 L9 7 M10 4 L11 5" stroke="#000" stroke-width="0.8"/></svg></div><div class="btn" style="left:692px;top:133px;width:24px;height:23px"><svg width="16" height="16" viewBox="0 0 16 16" overflow="visible"><path d="M2 8 L11 4 M5 14 L14 10" stroke="#000" stroke-width="1.2" stroke-dasharray="2.5 1.5"/><path d="M3 11 L12 7" stroke="#909090" stroke-width="0.7" stroke-dasharray="1 1"/><text x="0" y="16" font-family="Liberation Sans" font-size="7.5" font-weight="bold" fill="#000">1</text><text x="11.5" y="6" font-family="Liberation Sans" font-size="7.5" font-weight="bold" fill="#000">2</text></svg></div><div class="btn" style="left:724px;top:133px;width:24px;height:23px"><svg width="16" height="16" viewBox="0 0 16 16"><g transform="translate(1,1)" fill="none" stroke="#fff"><path d="M8 2 V9 L3 13 M8 9 L13 13 M6 4 L8 2 L10 4 M3 11 V13 H5 M11 13 H13 V11" stroke="#fff" stroke-width="1.2"/></g><g fill="none" stroke="#a0a0a0"><path d="M8 2 V9 L3 13 M8 9 L13 13 M6 4 L8 2 L10 4 M3 11 V13 H5 M11 13 H13 V11" stroke="#a0a0a0" stroke-width="1.2"/></g></svg></div><div class="a" style="left:7px;top:157px;width:1165px;height:1px;background:#a7a6aa"></div><div class="a" style="left:7px;top:158px;width:600px;height:661px;background:#e0dfe3"></div><div class="a" style="left:7px;top:158px;width:600px;height:1px;background:#fff"></div><div class="a" style="left:602px;top:158px;width:1px;height:661px;background:#f4f4f6"></div><div class="a" style="left:607px;top:158px;width:565px;height:661px;background:#808080;box-shadow:inset 1px 1px #6c6c66"></div><div class="a" style="left:9px;top:161px;width:589px;height:658px;background:#000"></div><div class="a" style="left:10px;top:162px;width:587px;height:657px;background:#a0a0a0"></div><div class="a" style="left:11px;top:163px;width:586px;height:656px;background:#fff"></div><div class="a" style="left:598px;top:161px;width:1px;height:658px;background:#fafaf8"></div><div class="a" style="left:579px;top:163px;width:18px;height:656px;background:#fbfbf8"></div><div class="a" style="left:579px;top:164px;width:16px;height:17px;border:1px solid #a4a4bc;border-radius:2px;background:linear-gradient(#fff,#dcdce6 60%,#c4c4d4)"><svg width="14" height="15" style="position:absolute;left:0;top:0"><path d="M3.5 9.5 L7 6 L10.5 9.5" stroke="#4d4d4d" stroke-width="2" fill="none"/></svg></div><div class="a" style="left:579px;top:182px;width:16px;height:509px;border:1px solid #9a9aae;border-radius:2px;background:linear-gradient(90deg,#f4f4f8,#e6e6ee 40%,#c8c8da)"></div><div class="a" style="left:584px;top:433px;width:7px;height:1px;background:#8c8ca0;box-shadow:0 1px #fff"></div><div class="a" style="left:584px;top:435px;width:7px;height:1px;background:#8c8ca0;box-shadow:0 1px #fff"></div><div class="a" style="left:584px;top:437px;width:7px;height:1px;background:#8c8ca0;box-shadow:0 1px #fff"></div><div class="a" style="left:584px;top:439px;width:7px;height:1px;background:#8c8ca0;box-shadow:0 1px #fff"></div><div class="a" style="left:579px;top:815px;width:16px;height:17px;border:1px solid #a4a4bc;border-radius:2px;background:linear-gradient(#fff,#dcdce6)"></div><div class="a" style="left:20px;top:180px;width:1px;height:8px;background:repeating-linear-gradient(#a0a0a0 0,#a0a0a0 1px,transparent 1px,transparent 2px)"></div><div class="a" style="left:39px;top:196px;width:1px;height:623px;background:repeating-linear-gradient(#a0a0a0 0,#a0a0a0 1px,transparent 1px,transparent 2px)"></div><div class="a" style="left:58px;top:372px;width:1px;height:447px;background:repeating-linear-gradient(#a0a0a0 0,#a0a0a0 1px,transparent 1px,transparent 2px)"></div><div class="a" style="left:12px;top:163px;width:16px;height:16px"><svg width="16" height="16" viewBox="0 0 16 16"><path d="M1 3 L2 2 L6 2 L7 3 L7 4 L14 4 L15 5 L15 13 L1 13 Z" fill="#ffff40" stroke="#606048" stroke-width="1"/><path d="M2 13.5 L15.5 13.5 L15.5 5" stroke="#000" stroke-width="1" fill="none"/><path d="M2 5 L14 5" stroke="#e8e880"/></svg></div><div class="a" style="left:33px;top:164px;height:16px;line-height:16px;white-space:nowrap">All Tracks</div><div class="a" style="left:26px;top:188px;width:6px;height:1px;background:repeating-linear-gradient(90deg,#a0a0a0 0,#a0a0a0 1px,transparent 1px,transparent 2px)"></div><div class="a" style="left:31px;top:179px;width:16px;height:16px"><svg width="16" height="16" viewBox="0 0 16 16"><path d="M1.5 9 L1.5 6.5 L3.5 4.5 L5.5 6.5 L8 7 L10.5 4.5 L13 6.5 L14.5 9 L14 11.5 L12 12.5 L4 12.5 L2 11.5 Z" fill="none" stroke="#f00" stroke-width="1.1"/></svg></div><div class="a" style="left:52px;top:180px;height:16px;line-height:16px;white-space:nowrap">e1-Ring</div><div class="a" style="left:16px;top:184px;width:9px;height:9px;border:1px solid #aca899;background:#fff"><svg width="9" height="9" style="position:absolute;left:-1px;top:-1px" shape-rendering="crispEdges"><path d="M2 4.5 H7" stroke="#000"/></svg></div><div class="a" style="left:45px;top:204px;width:6px;height:1px;background:repeating-linear-gradient(90deg,#a0a0a0 0,#a0a0a0 1px,transparent 1px,transparent 2px)"></div><div class="a" style="left:50px;top:195px;width:16px;height:16px"><svg width="16" height="16" viewBox="0 0 16 16"><path d="M2.5 1.5 L10 1.5 L13.5 5 L13.5 14.5 L2.5 14.5 Z" fill="#fff" stroke="#555" stroke-width="1"/><path d="M3.5 15.5 L14.5 15.5 L14.5 6" stroke="#000" fill="none"/><path d="M4 4.5 H8 M4 6.5 H11 M4 8.5 H11 M4 10.5 H6 M7 10.5 H11 M4 12.5 H11" stroke="#444" stroke-width="1"/></svg></div><div class="a" style="left:71px;top:196px;height:16px;line-height:16px;white-space:nowrap">Track Infomation</div><div class="a" style="left:35px;top:200px;width:9px;height:9px;border:1px solid #aca899;background:#fff"><svg width="9" height="9" style="position:absolute;left:-1px;top:-1px" shape-rendering="crispEdges"><path d="M2 4.5 H7" stroke="#000"/><path d="M4.5 2 V7" stroke="#000"/></svg></div><div class="a" style="left:45px;top:220px;width:6px;height:1px;background:repeating-linear-gradient(90deg,#a0a0a0 0,#a0a0a0 1px,transparent 1px,transparent 2px)"></div><div class="a" style="left:50px;top:211px;width:16px;height:16px"><svg width="16" height="16" viewBox="0 0 16 16"><path d="M5.5 1.5 L12 1.5 L15.5 5 L15.5 14.5 L5.5 14.5 Z" fill="#fff" stroke="#555"/><path d="M6.5 15.5 L15.5 15.5" stroke="#000"/><path d="M8 4.5 H11 M8 6.5 H14 M8 10.5 H14 M8 12.5 H14" stroke="#444"/><path d="M0 6 H6 V3 L11 8 L6 13 V10 H0 Z" fill="#f00"/></svg></div><div class="a" style="left:71px;top:212px;height:16px;line-height:16px;white-space:nowrap">Track Config</div><div class="a" style="left:35px;top:216px;width:9px;height:9px;border:1px solid #aca899;background:#fff"><svg width="9" height="9" style="position:absolute;left:-1px;top:-1px" shape-rendering="crispEdges"><path d="M2 4.5 H7" stroke="#000"/><path d="M4.5 2 V7" stroke="#000"/></svg></div><div class="a" style="left:45px;top:236px;width:6px;height:1px;background:repeating-linear-gradient(90deg,#a0a0a0 0,#a0a0a0 1px,transparent 1px,transparent 2px)"></div><div class="a" style="left:50px;top:227px;width:16px;height:16px"><svg width="16" height="16" viewBox="0 0 16 16"><path d="M2.5 1.5 L10 1.5 L13.5 5 L13.5 14.5 L2.5 14.5 Z" fill="#fff" stroke="#555" stroke-width="1"/><path d="M3.5 15.5 L14.5 15.5 L14.5 6" stroke="#000" fill="none"/><path d="M4 4.5 H8 M4 6.5 H11 M4 8.5 H11 M4 10.5 H6 M7 10.5 H11 M4 12.5 H11" stroke="#444" stroke-width="1"/></svg></div><div class="a" style="left:71px;top:228px;height:16px;line-height:16px;white-space:nowrap">Track Offsets</div><div class="a" style="left:35px;top:232px;width:9px;height:9px;border:1px solid #aca899;background:#fff"><svg width="9" height="9" style="position:absolute;left:-1px;top:-1px" shape-rendering="crispEdges"><path d="M2 4.5 H7" stroke="#000"/><path d="M4.5 2 V7" stroke="#000"/></svg></div><div class="a" style="left:45px;top:252px;width:6px;height:1px;background:repeating-linear-gradient(90deg,#a0a0a0 0,#a0a0a0 1px,transparent 1px,transparent 2px)"></div><div class="a" style="left:50px;top:243px;width:16px;height:16px"><svg width="16" height="16" viewBox="0 0 16 16"><path d="M1 8 L9 2 L15 9 L7 15 Z" fill="#000"/><path d="M1 8 L9 2" stroke="#f00" stroke-width="1.5" stroke-dasharray="2 2"/><path d="M7 15 L15 9" stroke="#f00" stroke-width="1.5" stroke-dasharray="2 2"/><path d="M1.5 8.5 L9 2.5" stroke="#00f" stroke-width="1" stroke-dasharray="1 3"/><path d="M7 14.5 L14.5 9" stroke="#00f" stroke-width="1" stroke-dasharray="1 3"/><path d="M5 9 L11 6" stroke="#fff" stroke-width="1" stroke-dasharray="2 1"/></svg></div><div class="a" style="left:71px;top:244px;height:16px;line-height:16px;white-space:nowrap">Track Data (150)</div><div class="a" style="left:35px;top:248px;width:9px;height:9px;border:1px solid #aca899;background:#fff"><svg width="9" height="9" style="position:absolute;left:-1px;top:-1px" shape-rendering="crispEdges"><path d="M2 4.5 H7" stroke="#000"/><path d="M4.5 2 V7" stroke="#000"/></svg></div><div class="a" style="left:45px;top:268px;width:6px;height:1px;background:repeating-linear-gradient(90deg,#a0a0a0 0,#a0a0a0 1px,transparent 1px,transparent 2px)"></div><div class="a" style="left:50px;top:259px;width:16px;height:16px"><svg width="16" height="16" viewBox="0 0 16 16"><path d="M0 7 L9.5 2 L15 8.3 L6.2 14.6 Z" fill="#000"/><path d="M0.5 7.2 L9.5 2.2 M6.2 14.2 L14.7 8.5" stroke="#ff0" stroke-width="1.3"/></svg></div><div class="a" style="left:71px;top:260px;height:16px;line-height:16px;white-space:nowrap">Pit Data (18)</div><div class="a" style="left:35px;top:264px;width:9px;height:9px;border:1px solid #aca899;background:#fff"><svg width="9" height="9" style="position:absolute;left:-1px;top:-1px" shape-rendering="crispEdges"><path d="M2 4.5 H7" stroke="#000"/><path d="M4.5 2 V7" stroke="#000"/></svg></div><div class="a" style="left:45px;top:284px;width:6px;height:1px;background:repeating-linear-gradient(90deg,#a0a0a0 0,#a0a0a0 1px,transparent 1px,transparent 2px)"></div><div class="a" style="left:50px;top:275px;width:16px;height:16px"><svg width="16" height="16" viewBox="0 0 16 16"><path d="M2 12.6 L10 6" stroke="#f00" stroke-width="1.1"/><path d="M8 5.3 L13 4.5 L12.6 9.5 Z" fill="#f00"/></svg></div><div class="a" style="left:71px;top:276px;height:16px;line-height:16px;white-space:nowrap">CC Line Data (83)</div><div class="a" style="left:35px;top:280px;width:9px;height:9px;border:1px solid #aca899;background:#fff"><svg width="9" height="9" style="position:absolute;left:-1px;top:-1px" shape-rendering="crispEdges"><path d="M2 4.5 H7" stroke="#000"/><path d="M4.5 2 V7" stroke="#000"/></svg></div><div class="a" style="left:45px;top:300px;width:6px;height:1px;background:repeating-linear-gradient(90deg,#a0a0a0 0,#a0a0a0 1px,transparent 1px,transparent 2px)"></div><div class="a" style="left:50px;top:291px;width:16px;height:16px"><svg width="16" height="16" viewBox="0 0 16 16"><path d="M2.5 3.5 V13 Q8 16 13.5 13 V3.5" fill="#ff0" stroke="#808080"/><ellipse cx="8" cy="3.5" rx="5.5" ry="2.5" fill="#ffff80" stroke="#808080"/><path d="M5 6 V14" stroke="#fff"/></svg></div><div class="a" style="left:71px;top:292px;height:16px;line-height:16px;white-space:nowrap">Object Definitions(100)</div><div class="a" style="left:35px;top:296px;width:9px;height:9px;border:1px solid #aca899;background:#fff"><svg width="9" height="9" style="position:absolute;left:-1px;top:-1px" shape-rendering="crispEdges"><path d="M2 4.5 H7" stroke="#000"/><path d="M4.5 2 V7" stroke="#000"/></svg></div><div class="a" style="left:45px;top:316px;width:6px;height:1px;background:repeating-linear-gradient(90deg,#a0a0a0 0,#a0a0a0 1px,transparent 1px,transparent 2px)"></div><div class="a" style="left:50px;top:307px;width:16px;height:16px"><svg width="16" height="16" viewBox="0 0 16 16"><path d="M2.5 3.5 V13 Q8 16 13.5 13 V3.5" fill="#fff" stroke="#808080"/><ellipse cx="8" cy="3.5" rx="5.5" ry="2.5" fill="#fff" stroke="#808080"/><path d="M5 11.5 H6 M8 11.5 H9 M11 11.5 H12" stroke="#808080"/></svg></div><div class="a" style="left:71px;top:308px;height:16px;line-height:16px;white-space:nowrap">Internal Object Definitions(23)</div><div class="a" style="left:35px;top:312px;width:9px;height:9px;border:1px solid #aca899;background:#fff"><svg width="9" height="9" style="position:absolute;left:-1px;top:-1px" shape-rendering="crispEdges"><path d="M2 4.5 H7" stroke="#000"/><path d="M4.5 2 V7" stroke="#000"/></svg></div><div class="a" style="left:45px;top:332px;width:6px;height:1px;background:repeating-linear-gradient(90deg,#a0a0a0 0,#a0a0a0 1px,transparent 1px,transparent 2px)"></div><div class="a" style="left:50px;top:323px;width:16px;height:16px"><svg width="16" height="16" viewBox="0 0 16 16"><rect x="0" y="4.2" width="4" height="3" fill="#a0a0a0"/><rect x="11" y="4" width="5" height="3" fill="#a0a0a0"/><rect x="0" y="7" width="4" height="6" rx="1" fill="#000"/><rect x="11" y="7" width="5" height="6" rx="1" fill="#000"/><rect x="4.3" y="1.9" width="4.4" height="1.3" fill="#a0a0a0"/><rect x="1" y="3" width="2" height="1" fill="#000"/><circle cx="7.2" cy="9.7" r="4.3" fill="#c8c8c8" stroke="#000" stroke-width="0.9" stroke-dasharray="2 1.4"/><circle cx="7.2" cy="9.7" r="1.3" fill="#f0f0f0"/></svg></div><div class="a" style="left:71px;top:324px;height:16px;line-height:16px;white-space:nowrap">Camera Definitions(20)</div><div class="a" style="left:35px;top:328px;width:9px;height:9px;border:1px solid #aca899;background:#fff"><svg width="9" height="9" style="position:absolute;left:-1px;top:-1px" shape-rendering="crispEdges"><path d="M2 4.5 H7" stroke="#000"/><path d="M4.5 2 V7" stroke="#000"/></svg></div><div class="a" style="left:45px;top:348px;width:6px;height:1px;background:repeating-linear-gradient(90deg,#a0a0a0 0,#a0a0a0 1px,transparent 1px,transparent 2px)"></div><div class="a" style="left:50px;top:339px;width:16px;height:16px"><svg width="16" height="16" viewBox="0 0 16 16"><path d="M2.5 1.5 L10 1.5 L13.5 5 L13.5 14.5 L2.5 14.5 Z" fill="#fff" stroke="#555" stroke-width="1"/><path d="M3.5 15.5 L14.5 15.5 L14.5 6" stroke="#000" fill="none"/><path d="M4 4.5 H8 M4 6.5 H11 M4 8.5 H11 M4 10.5 H6 M7 10.5 H11 M4 12.5 H11" stroke="#444" stroke-width="1"/></svg></div><div class="a" style="left:71px;top:340px;height:16px;line-height:16px;white-space:nowrap">CC Car Setup</div><div class="a" style="left:35px;top:344px;width:9px;height:9px;border:1px solid #aca899;background:#fff"><svg width="9" height="9" style="position:absolute;left:-1px;top:-1px" shape-rendering="crispEdges"><path d="M2 4.5 H7" stroke="#000"/><path d="M4.5 2 V7" stroke="#000"/></svg></div><div class="a" style="left:45px;top:364px;width:6px;height:1px;background:repeating-linear-gradient(90deg,#a0a0a0 0,#a0a0a0 1px,transparent 1px,transparent 2px)"></div><div class="a" style="left:50px;top:355px;width:16px;height:16px"><svg width="16" height="16" viewBox="0 0 16 16"><path d="M1.5 1.5 L9 1.5 L12.5 5 L12.5 14.5 L1.5 14.5 Z" fill="#fff" stroke="#606060"/><path d="M2.5 15.5 L13.5 15.5 L13.5 5.5" stroke="#000" fill="none"/><rect x="3" y="4" width="8" height="6" fill="#00f"/><rect x="3" y="10" width="8" height="3" fill="#080"/><path d="M5 5 L9 8" stroke="#f00" stroke-width="1.3"/></svg></div><div class="a" style="left:71px;top:356px;height:16px;line-height:16px;white-space:nowrap">Jam Files(37)</div><div class="a" style="left:35px;top:360px;width:9px;height:9px;border:1px solid #aca899;background:#fff"><svg width="9" height="9" style="position:absolute;left:-1px;top:-1px" shape-rendering="crispEdges"><path d="M2 4.5 H7" stroke="#000"/></svg></div><div class="a" style="left:64px;top:380px;width:6px;height:1px;background:repeating-linear-gradient(90deg,#a0a0a0 0,#a0a0a0 1px,transparent 1px,transparent 2px)"></div><div class="a" style="left:69px;top:371px;width:16px;height:16px"><svg width="16" height="16" viewBox="0 0 16 16"><path d="M1.5 1.5 L9 1.5 L12.5 5 L12.5 14.5 L1.5 14.5 Z" fill="#f00" stroke="#606060"/><path d="M2.5 15.5 L13.5 15.5 L13.5 5.5" stroke="#000" fill="none"/><rect x="3" y="4" width="8" height="6" fill="#00f"/><rect x="3" y="10" width="8" height="3" fill="#080"/><path d="M5 5 L9 8" stroke="#f00" stroke-width="1.3"/></svg></div><div class="a" style="left:90px;top:372px;height:16px;line-height:16px;white-space:nowrap;letter-spacing:-0.1px">0 gamejams\roadsgn.jam</div><div class="a" style="left:54px;top:376px;width:9px;height:9px;border:1px solid #aca899;background:#fff"><svg width="9" height="9" style="position:absolute;left:-1px;top:-1px" shape-rendering="crispEdges"><path d="M2 4.5 H7" stroke="#000"/><path d="M4.5 2 V7" stroke="#000"/></svg></div><div class="a" style="left:64px;top:396px;width:6px;height:1px;background:repeating-linear-gradient(90deg,#a0a0a0 0,#a0a0a0 1px,transparent 1px,transparent 2px)"></div><div class="a" style="left:69px;top:387px;width:16px;height:16px"><svg width="16" height="16" viewBox="0 0 16 16"><path d="M1.5 1.5 L9 1.5 L12.5 5 L12.5 14.5 L1.5 14.5 Z" fill="#f00" stroke="#606060"/><path d="M2.5 15.5 L13.5 15.5 L13.5 5.5" stroke="#000" fill="none"/><rect x="3" y="4" width="8" height="6" fill="#00f"/><rect x="3" y="10" width="8" height="3" fill="#080"/><path d="M5 5 L9 8" stroke="#f00" stroke-width="1.3"/></svg></div><div class="a" style="left:90px;top:388px;height:16px;line-height:16px;white-space:nowrap;letter-spacing:-0.1px">1 gamejams\stands.jam</div><div class="a" style="left:54px;top:392px;width:9px;height:9px;border:1px solid #aca899;background:#fff"><svg width="9" height="9" style="position:absolute;left:-1px;top:-1px" shape-rendering="crispEdges"><path d="M2 4.5 H7" stroke="#000"/><path d="M4.5 2 V7" stroke="#000"/></svg></div><div class="a" style="left:64px;top:412px;width:6px;height:1px;background:repeating-linear-gradient(90deg,#a0a0a0 0,#a0a0a0 1px,transparent 1px,transparent 2px)"></div><div class="a" style="left:69px;top:403px;width:16px;height:16px"><svg width="16" height="16" viewBox="0 0 16 16"><path d="M1.5 1.5 L9 1.5 L12.5 5 L12.5 14.5 L1.5 14.5 Z" fill="#f00" stroke="#606060"/><path d="M2.5 15.5 L13.5 15.5 L13.5 5.5" stroke="#000" fill="none"/><rect x="3" y="4" width="8" height="6" fill="#00f"/><rect x="3" y="10" width="8" height="3" fill="#080"/><path d="M5 5 L9 8" stroke="#f00" stroke-width="1.3"/></svg></div><div class="a" style="left:90px;top:404px;height:16px;line-height:16px;white-space:nowrap;letter-spacing:-0.1px">2 gamejams\crowd4.jam</div><div class="a" style="left:54px;top:408px;width:9px;height:9px;border:1px solid #aca899;background:#fff"><svg width="9" height="9" style="position:absolute;left:-1px;top:-1px" shape-rendering="crispEdges"><path d="M2 4.5 H7" stroke="#000"/><path d="M4.5 2 V7" stroke="#000"/></svg></div><div class="a" style="left:64px;top:428px;width:6px;height:1px;background:repeating-linear-gradient(90deg,#a0a0a0 0,#a0a0a0 1px,transparent 1px,transparent 2px)"></div><div class="a" style="left:69px;top:419px;width:16px;height:16px"><svg width="16" height="16" viewBox="0 0 16 16"><path d="M1.5 1.5 L9 1.5 L12.5 5 L12.5 14.5 L1.5 14.5 Z" fill="#f00" stroke="#606060"/><path d="M2.5 15.5 L13.5 15.5 L13.5 5.5" stroke="#000" fill="none"/><rect x="3" y="4" width="8" height="6" fill="#00f"/><rect x="3" y="10" width="8" height="3" fill="#080"/><path d="M5 5 L9 8" stroke="#f00" stroke-width="1.3"/></svg></div><div class="a" style="left:90px;top:420px;height:16px;line-height:16px;white-space:nowrap;letter-spacing:-0.1px">3 gamejams\mpush.jam</div><div class="a" style="left:54px;top:424px;width:9px;height:9px;border:1px solid #aca899;background:#fff"><svg width="9" height="9" style="position:absolute;left:-1px;top:-1px" shape-rendering="crispEdges"><path d="M2 4.5 H7" stroke="#000"/><path d="M4.5 2 V7" stroke="#000"/></svg></div><div class="a" style="left:64px;top:444px;width:6px;height:1px;background:repeating-linear-gradient(90deg,#a0a0a0 0,#a0a0a0 1px,transparent 1px,transparent 2px)"></div><div class="a" style="left:69px;top:435px;width:16px;height:16px"><svg width="16" height="16" viewBox="0 0 16 16"><path d="M1.5 1.5 L9 1.5 L12.5 5 L12.5 14.5 L1.5 14.5 Z" fill="#f00" stroke="#606060"/><path d="M2.5 15.5 L13.5 15.5 L13.5 5.5" stroke="#000" fill="none"/><rect x="3" y="4" width="8" height="6" fill="#00f"/><rect x="3" y="10" width="8" height="3" fill="#080"/><path d="M5 5 L9 8" stroke="#f00" stroke-width="1.3"/></svg></div><div class="a" style="left:90px;top:436px;height:16px;line-height:16px;white-space:nowrap;letter-spacing:-0.1px">4 gamejams\pc-extr1.jam</div><div class="a" style="left:54px;top:440px;width:9px;height:9px;border:1px solid #aca899;background:#fff"><svg width="9" height="9" style="position:absolute;left:-1px;top:-1px" shape-rendering="crispEdges"><path d="M2 4.5 H7" stroke="#000"/><path d="M4.5 2 V7" stroke="#000"/></svg></div><div class="a" style="left:64px;top:460px;width:6px;height:1px;background:repeating-linear-gradient(90deg,#a0a0a0 0,#a0a0a0 1px,transparent 1px,transparent 2px)"></div><div class="a" style="left:69px;top:451px;width:16px;height:16px"><svg width="16" height="16" viewBox="0 0 16 16"><path d="M1.5 1.5 L9 1.5 L12.5 5 L12.5 14.5 L1.5 14.5 Z" fill="#f00" stroke="#606060"/><path d="M2.5 15.5 L13.5 15.5 L13.5 5.5" stroke="#000" fill="none"/><rect x="3" y="4" width="8" height="6" fill="#00f"/><rect x="3" y="10" width="8" height="3" fill="#080"/><path d="M5 5 L9 8" stroke="#f00" stroke-width="1.3"/></svg></div><div class="a" style="left:90px;top:452px;height:16px;line-height:16px;white-space:nowrap;letter-spacing:-0.1px">5 gamejams\pc-wheel.jam</div><div class="a" style="left:54px;top:456px;width:9px;height:9px;border:1px solid #aca899;background:#fff"><svg width="9" height="9" style="position:absolute;left:-1px;top:-1px" shape-rendering="crispEdges"><path d="M2 4.5 H7" stroke="#000"/><path d="M4.5 2 V7" stroke="#000"/></svg></div><div class="a" style="left:64px;top:476px;width:6px;height:1px;background:repeating-linear-gradient(90deg,#a0a0a0 0,#a0a0a0 1px,transparent 1px,transparent 2px)"></div><div class="a" style="left:69px;top:467px;width:16px;height:16px"><svg width="16" height="16" viewBox="0 0 16 16"><path d="M1.5 1.5 L9 1.5 L12.5 5 L12.5 14.5 L1.5 14.5 Z" fill="#f00" stroke="#606060"/><path d="M2.5 15.5 L13.5 15.5 L13.5 5.5" stroke="#000" fill="none"/><rect x="3" y="4" width="8" height="6" fill="#00f"/><rect x="3" y="10" width="8" height="3" fill="#080"/><path d="M5 5 L9 8" stroke="#f00" stroke-width="1.3"/></svg></div><div class="a" style="left:90px;top:468px;height:16px;line-height:16px;white-space:nowrap;letter-spacing:-0.1px">6 gamejams\pc-jack.jam</div><div class="a" style="left:54px;top:472px;width:9px;height:9px;border:1px solid #aca899;background:#fff"><svg width="9" height="9" style="position:absolute;left:-1px;top:-1px" shape-rendering="crispEdges"><path d="M2 4.5 H7" stroke="#000"/><path d="M4.5 2 V7" stroke="#000"/></svg></div><div class="a" style="left:64px;top:492px;width:6px;height:1px;background:repeating-linear-gradient(90deg,#a0a0a0 0,#a0a0a0 1px,transparent 1px,transparent 2px)"></div><div class="a" style="left:69px;top:483px;width:16px;height:16px"><svg width="16" height="16" viewBox="0 0 16 16"><path d="M1.5 1.5 L9 1.5 L12.5 5 L12.5 14.5 L1.5 14.5 Z" fill="#f00" stroke="#606060"/><path d="M2.5 15.5 L13.5 15.5 L13.5 5.5" stroke="#000" fill="none"/><rect x="3" y="4" width="8" height="6" fill="#00f"/><rect x="3" y="10" width="8" height="3" fill="#080"/><path d="M5 5 L9 8" stroke="#f00" stroke-width="1.3"/></svg></div><div class="a" style="left:90px;top:484px;height:16px;line-height:16px;white-space:nowrap;letter-spacing:-0.1px">7 gamejams\pc-extr2.jam</div><div class="a" style="left:54px;top:488px;width:9px;height:9px;border:1px solid #aca899;background:#fff"><svg width="9" height="9" style="position:absolute;left:-1px;top:-1px" shape-rendering="crispEdges"><path d="M2 4.5 H7" stroke="#000"/><path d="M4.5 2 V7" stroke="#000"/></svg></div><div class="a" style="left:64px;top:508px;width:6px;height:1px;background:repeating-linear-gradient(90deg,#a0a0a0 0,#a0a0a0 1px,transparent 1px,transparent 2px)"></div><div class="a" style="left:69px;top:499px;width:16px;height:16px"><svg width="16" height="16" viewBox="0 0 16 16"><path d="M1.5 1.5 L9 1.5 L12.5 5 L12.5 14.5 L1.5 14.5 Z" fill="#f00" stroke="#606060"/><path d="M2.5 15.5 L13.5 15.5 L13.5 5.5" stroke="#000" fill="none"/><rect x="3" y="4" width="8" height="6" fill="#00f"/><rect x="3" y="10" width="8" height="3" fill="#080"/><path d="M5 5 L9 8" stroke="#f00" stroke-width="1.3"/></svg></div><div class="a" style="left:90px;top:500px;height:16px;line-height:16px;white-space:nowrap;letter-spacing:-0.1px">8 gamejams\pitprop1.jam</div><div class="a" style="left:54px;top:504px;width:9px;height:9px;border:1px solid #aca899;background:#fff"><svg width="9" height="9" style="position:absolute;left:-1px;top:-1px" shape-rendering="crispEdges"><path d="M2 4.5 H7" stroke="#000"/><path d="M4.5 2 V7" stroke="#000"/></svg></div><div class="a" style="left:64px;top:524px;width:6px;height:1px;background:repeating-linear-gradient(90deg,#a0a0a0 0,#a0a0a0 1px,transparent 1px,transparent 2px)"></div><div class="a" style="left:69px;top:515px;width:16px;height:16px"><svg width="16" height="16" viewBox="0 0 16 16"><path d="M1.5 1.5 L9 1.5 L12.5 5 L12.5 14.5 L1.5 14.5 Z" fill="#f00" stroke="#606060"/><path d="M2.5 15.5 L13.5 15.5 L13.5 5.5" stroke="#000" fill="none"/><rect x="3" y="4" width="8" height="6" fill="#00f"/><rect x="3" y="10" width="8" height="3" fill="#080"/><path d="M5 5 L9 8" stroke="#f00" stroke-width="1.3"/></svg></div><div class="a" style="left:90px;top:516px;height:16px;line-height:16px;white-space:nowrap;letter-spacing:-0.1px">9 gamejams\pitprop2.jam</div><div class="a" style="left:54px;top:520px;width:9px;height:9px;border:1px solid #aca899;background:#fff"><svg width="9" height="9" style="position:absolute;left:-1px;top:-1px" shape-rendering="crispEdges"><path d="M2 4.5 H7" stroke="#000"/><path d="M4.5 2 V7" stroke="#000"/></svg></div><div class="a" style="left:64px;top:540px;width:6px;height:1px;background:repeating-linear-gradient(90deg,#a0a0a0 0,#a0a0a0 1px,transparent 1px,transparent 2px)"></div><div class="a" style="left:69px;top:531px;width:16px;height:16px"><svg width="16" height="16" viewBox="0 0 16 16"><path d="M1.5 1.5 L9 1.5 L12.5 5 L12.5 14.5 L1.5 14.5 Z" fill="#f00" stroke="#606060"/><path d="M2.5 15.5 L13.5 15.5 L13.5 5.5" stroke="#000" fill="none"/><rect x="3" y="4" width="8" height="6" fill="#00f"/><rect x="3" y="10" width="8" height="3" fill="#080"/><path d="M5 5 L9 8" stroke="#f00" stroke-width="1.3"/></svg></div><div class="a" style="left:90px;top:532px;height:16px;line-height:16px;white-space:nowrap;letter-spacing:-0.1px">10 gamejams\fuel.jam</div><div class="a" style="left:54px;top:536px;width:9px;height:9px;border:1px solid #aca899;background:#fff"><svg width="9" height="9" style="position:absolute;left:-1px;top:-1px" shape-rendering="crispEdges"><path d="M2 4.5 H7" stroke="#000"/><path d="M4.5 2 V7" stroke="#000"/></svg></div><div class="a" style="left:64px;top:556px;width:6px;height:1px;background:repeating-linear-gradient(90deg,#a0a0a0 0,#a0a0a0 1px,transparent 1px,transparent 2px)"></div><div class="a" style="left:69px;top:547px;width:16px;height:16px"><svg width="16" height="16" viewBox="0 0 16 16"><path d="M1.5 1.5 L9 1.5 L12.5 5 L12.5 14.5 L1.5 14.5 Z" fill="#f00" stroke="#606060"/><path d="M2.5 15.5 L13.5 15.5 L13.5 5.5" stroke="#000" fill="none"/><rect x="3" y="4" width="8" height="6" fill="#00f"/><rect x="3" y="10" width="8" height="3" fill="#080"/><path d="M5 5 L9 8" stroke="#f00" stroke-width="1.3"/></svg></div><div class="a" style="left:90px;top:548px;height:16px;line-height:16px;white-space:nowrap;letter-spacing:-0.1px">11 gamejams\flags1.jam</div><div class="a" style="left:54px;top:552px;width:9px;height:9px;border:1px solid #aca899;background:#fff"><svg width="9" height="9" style="position:absolute;left:-1px;top:-1px" shape-rendering="crispEdges"><path d="M2 4.5 H7" stroke="#000"/><path d="M4.5 2 V7" stroke="#000"/></svg></div><div class="a" style="left:64px;top:572px;width:6px;height:1px;background:repeating-linear-gradient(90deg,#a0a0a0 0,#a0a0a0 1px,transparent 1px,transparent 2px)"></div><div class="a" style="left:69px;top:563px;width:16px;height:16px"><svg width="16" height="16" viewBox="0 0 16 16"><path d="M1.5 1.5 L9 1.5 L12.5 5 L12.5 14.5 L1.5 14.5 Z" fill="#f00" stroke="#606060"/><path d="M2.5 15.5 L13.5 15.5 L13.5 5.5" stroke="#000" fill="none"/><rect x="3" y="4" width="8" height="6" fill="#00f"/><rect x="3" y="10" width="8" height="3" fill="#080"/><path d="M5 5 L9 8" stroke="#f00" stroke-width="1.3"/></svg></div><div class="a" style="left:90px;top:564px;height:16px;line-height:16px;white-space:nowrap;letter-spacing:-0.1px">12 gamejams\chequ1.jam</div><div class="a" style="left:54px;top:568px;width:9px;height:9px;border:1px solid #aca899;background:#fff"><svg width="9" height="9" style="position:absolute;left:-1px;top:-1px" shape-rendering="crispEdges"><path d="M2 4.5 H7" stroke="#000"/><path d="M4.5 2 V7" stroke="#000"/></svg></div><div class="a" style="left:64px;top:588px;width:6px;height:1px;background:repeating-linear-gradient(90deg,#a0a0a0 0,#a0a0a0 1px,transparent 1px,transparent 2px)"></div><div class="a" style="left:69px;top:579px;width:16px;height:16px"><svg width="16" height="16" viewBox="0 0 16 16"><path d="M1.5 1.5 L9 1.5 L12.5 5 L12.5 14.5 L1.5 14.5 Z" fill="#f00" stroke="#606060"/><path d="M2.5 15.5 L13.5 15.5 L13.5 5.5" stroke="#000" fill="none"/><rect x="3" y="4" width="8" height="6" fill="#00f"/><rect x="3" y="10" width="8" height="3" fill="#080"/><path d="M5 5 L9 8" stroke="#f00" stroke-width="1.3"/></svg></div><div class="a" style="left:90px;top:580px;height:16px;line-height:16px;white-space:nowrap;letter-spacing:-0.1px">13 gamejams\flagcheq.jam</div><div class="a" style="left:54px;top:584px;width:9px;height:9px;border:1px solid #aca899;background:#fff"><svg width="9" height="9" style="position:absolute;left:-1px;top:-1px" shape-rendering="crispEdges"><path d="M2 4.5 H7" stroke="#000"/><path d="M4.5 2 V7" stroke="#000"/></svg></div><div class="a" style="left:64px;top:604px;width:6px;height:1px;background:repeating-linear-gradient(90deg,#a0a0a0 0,#a0a0a0 1px,transparent 1px,transparent 2px)"></div><div class="a" style="left:69px;top:595px;width:16px;height:16px"><svg width="16" height="16" viewBox="0 0 16 16"><path d="M1.5 1.5 L9 1.5 L12.5 5 L12.5 14.5 L1.5 14.5 Z" fill="#f00" stroke="#606060"/><path d="M2.5 15.5 L13.5 15.5 L13.5 5.5" stroke="#000" fill="none"/><rect x="3" y="4" width="8" height="6" fill="#00f"/><rect x="3" y="10" width="8" height="3" fill="#080"/><path d="M5 5 L9 8" stroke="#f00" stroke-width="1.3"/></svg></div><div class="a" style="left:90px;top:596px;height:16px;line-height:16px;white-space:nowrap;letter-spacing:-0.1px">14 gamejams\spgrid2.jam</div><div class="a" style="left:54px;top:600px;width:9px;height:9px;border:1px solid #aca899;background:#fff"><svg width="9" height="9" style="position:absolute;left:-1px;top:-1px" shape-rendering="crispEdges"><path d="M2 4.5 H7" stroke="#000"/><path d="M4.5 2 V7" stroke="#000"/></svg></div><div class="a" style="left:64px;top:620px;width:6px;height:1px;background:repeating-linear-gradient(90deg,#a0a0a0 0,#a0a0a0 1px,transparent 1px,transparent 2px)"></div><div class="a" style="left:69px;top:611px;width:16px;height:16px"><svg width="16" height="16" viewBox="0 0 16 16"><path d="M1.5 1.5 L9 1.5 L12.5 5 L12.5 14.5 L1.5 14.5 Z" fill="#f00" stroke="#606060"/><path d="M2.5 15.5 L13.5 15.5 L13.5 5.5" stroke="#000" fill="none"/><rect x="3" y="4" width="8" height="6" fill="#00f"/><rect x="3" y="10" width="8" height="3" fill="#080"/><path d="M5 5 L9 8" stroke="#f00" stroke-width="1.3"/></svg></div><div class="a" style="left:90px;top:612px;height:16px;line-height:16px;white-space:nowrap;letter-spacing:-0.1px">15 gamejams\damage.jam</div><div class="a" style="left:54px;top:616px;width:9px;height:9px;border:1px solid #aca899;background:#fff"><svg width="9" height="9" style="position:absolute;left:-1px;top:-1px" shape-rendering="crispEdges"><path d="M2 4.5 H7" stroke="#000"/><path d="M4.5 2 V7" stroke="#000"/></svg></div><div class="a" style="left:64px;top:636px;width:6px;height:1px;background:repeating-linear-gradient(90deg,#a0a0a0 0,#a0a0a0 1px,transparent 1px,transparent 2px)"></div><div class="a" style="left:69px;top:627px;width:16px;height:16px"><svg width="16" height="16" viewBox="0 0 16 16"><path d="M1.5 1.5 L9 1.5 L12.5 5 L12.5 14.5 L1.5 14.5 Z" fill="#fff" stroke="#606060"/><path d="M2.5 15.5 L13.5 15.5 L13.5 5.5" stroke="#000" fill="none"/><rect x="3" y="4" width="8" height="6" fill="#00f"/><rect x="3" y="10" width="8" height="3" fill="#080"/><path d="M5 5 L9 8" stroke="#f00" stroke-width="1.3"/></svg></div><div class="a" style="left:90px;top:628px;height:16px;line-height:16px;white-space:nowrap;letter-spacing:-0.1px">16 gamejams\dproad_.jam</div><div class="a" style="left:54px;top:632px;width:9px;height:9px;border:1px solid #aca899;background:#fff"><svg width="9" height="9" style="position:absolute;left:-1px;top:-1px" shape-rendering="crispEdges"><path d="M2 4.5 H7" stroke="#000"/><path d="M4.5 2 V7" stroke="#000"/></svg></div><div class="a" style="left:64px;top:652px;width:6px;height:1px;background:repeating-linear-gradient(90deg,#a0a0a0 0,#a0a0a0 1px,transparent 1px,transparent 2px)"></div><div class="a" style="left:88px;top:644px;width:147px;height:15px;background:#d9d9de"></div><div class="a" style="left:69px;top:643px;width:16px;height:16px"><svg width="16" height="16" viewBox="0 0 16 16"><path d="M1.5 1.5 L9 1.5 L12.5 5 L12.5 14.5 L1.5 14.5 Z" fill="#fff" stroke="#606060"/><path d="M2.5 15.5 L13.5 15.5 L13.5 5.5" stroke="#000" fill="none"/><rect x="3" y="4" width="8" height="6" fill="#00f"/><rect x="3" y="10" width="8" height="3" fill="#080"/><path d="M5 5 L9 8" stroke="#f00" stroke-width="1.3"/></svg></div><div class="a" style="left:90px;top:644px;height:16px;line-height:16px;white-space:nowrap;letter-spacing:-0.1px">17 gamejams\e1jam\sky3.jam</div><div class="a" style="left:54px;top:648px;width:9px;height:9px;border:1px solid #aca899;background:#fff"><svg width="9" height="9" style="position:absolute;left:-1px;top:-1px" shape-rendering="crispEdges"><path d="M2 4.5 H7" stroke="#000"/><path d="M4.5 2 V7" stroke="#000"/></svg></div><div class="a" style="left:64px;top:668px;width:6px;height:1px;background:repeating-linear-gradient(90deg,#a0a0a0 0,#a0a0a0 1px,transparent 1px,transparent 2px)"></div><div class="a" style="left:69px;top:659px;width:16px;height:16px"><svg width="16" height="16" viewBox="0 0 16 16"><path d="M1.5 1.5 L9 1.5 L12.5 5 L12.5 14.5 L1.5 14.5 Z" fill="#fff" stroke="#606060"/><path d="M2.5 15.5 L13.5 15.5 L13.5 5.5" stroke="#000" fill="none"/><rect x="3" y="4" width="8" height="6" fill="#00f"/><rect x="3" y="10" width="8" height="3" fill="#080"/><path d="M5 5 L9 8" stroke="#f00" stroke-width="1.3"/></svg></div><div class="a" style="left:90px;top:660px;height:16px;line-height:16px;white-space:nowrap;letter-spacing:-0.1px">18 gamejams\e1jam\adverts1.jam</div><div class="a" style="left:54px;top:664px;width:9px;height:9px;border:1px solid #aca899;background:#fff"><svg width="9" height="9" style="position:absolute;left:-1px;top:-1px" shape-rendering="crispEdges"><path d="M2 4.5 H7" stroke="#000"/><path d="M4.5 2 V7" stroke="#000"/></svg></div><div class="a" style="left:64px;top:684px;width:6px;height:1px;background:repeating-linear-gradient(90deg,#a0a0a0 0,#a0a0a0 1px,transparent 1px,transparent 2px)"></div><div class="a" style="left:69px;top:675px;width:16px;height:16px"><svg width="16" height="16" viewBox="0 0 16 16"><path d="M1.5 1.5 L9 1.5 L12.5 5 L12.5 14.5 L1.5 14.5 Z" fill="#fff" stroke="#606060"/><path d="M2.5 15.5 L13.5 15.5 L13.5 5.5" stroke="#000" fill="none"/><rect x="3" y="4" width="8" height="6" fill="#00f"/><rect x="3" y="10" width="8" height="3" fill="#080"/><path d="M5 5 L9 8" stroke="#f00" stroke-width="1.3"/></svg></div><div class="a" style="left:90px;top:676px;height:16px;line-height:16px;white-space:nowrap;letter-spacing:-0.1px">19 gamejams\e1jam\adverts3.jam</div><div class="a" style="left:54px;top:680px;width:9px;height:9px;border:1px solid #aca899;background:#fff"><svg width="9" height="9" style="position:absolute;left:-1px;top:-1px" shape-rendering="crispEdges"><path d="M2 4.5 H7" stroke="#000"/><path d="M4.5 2 V7" stroke="#000"/></svg></div><div class="a" style="left:64px;top:700px;width:6px;height:1px;background:repeating-linear-gradient(90deg,#a0a0a0 0,#a0a0a0 1px,transparent 1px,transparent 2px)"></div><div class="a" style="left:69px;top:691px;width:16px;height:16px"><svg width="16" height="16" viewBox="0 0 16 16"><path d="M1.5 1.5 L9 1.5 L12.5 5 L12.5 14.5 L1.5 14.5 Z" fill="#fff" stroke="#606060"/><path d="M2.5 15.5 L13.5 15.5 L13.5 5.5" stroke="#000" fill="none"/><rect x="3" y="4" width="8" height="6" fill="#00f"/><rect x="3" y="10" width="8" height="3" fill="#080"/><path d="M5 5 L9 8" stroke="#f00" stroke-width="1.3"/></svg></div><div class="a" style="left:90px;top:692px;height:16px;line-height:16px;white-space:nowrap;letter-spacing:-0.1px">20 gamejams\porjams\horpor.jam</div><div class="a" style="left:54px;top:696px;width:9px;height:9px;border:1px solid #aca899;background:#fff"><svg width="9" height="9" style="position:absolute;left:-1px;top:-1px" shape-rendering="crispEdges"><path d="M2 4.5 H7" stroke="#000"/><path d="M4.5 2 V7" stroke="#000"/></svg></div><div class="a" style="left:64px;top:716px;width:6px;height:1px;background:repeating-linear-gradient(90deg,#a0a0a0 0,#a0a0a0 1px,transparent 1px,transparent 2px)"></div><div class="a" style="left:69px;top:707px;width:16px;height:16px"><svg width="16" height="16" viewBox="0 0 16 16"><path d="M1.5 1.5 L9 1.5 L12.5 5 L12.5 14.5 L1.5 14.5 Z" fill="#fff" stroke="#606060"/><path d="M2.5 15.5 L13.5 15.5 L13.5 5.5" stroke="#000" fill="none"/><rect x="3" y="4" width="8" height="6" fill="#00f"/><rect x="3" y="10" width="8" height="3" fill="#080"/><path d="M5 5 L9 8" stroke="#f00" stroke-width="1.3"/></svg></div><div class="a" style="left:90px;top:708px;height:16px;line-height:16px;white-space:nowrap;letter-spacing:-0.1px">21 gamejams\e1jam\pavport.jam</div><div class="a" style="left:54px;top:712px;width:9px;height:9px;border:1px solid #aca899;background:#fff"><svg width="9" height="9" style="position:absolute;left:-1px;top:-1px" shape-rendering="crispEdges"><path d="M2 4.5 H7" stroke="#000"/><path d="M4.5 2 V7" stroke="#000"/></svg></div><div class="a" style="left:64px;top:732px;width:6px;height:1px;background:repeating-linear-gradient(90deg,#a0a0a0 0,#a0a0a0 1px,transparent 1px,transparent 2px)"></div><div class="a" style="left:69px;top:723px;width:16px;height:16px"><svg width="16" height="16" viewBox="0 0 16 16"><path d="M1.5 1.5 L9 1.5 L12.5 5 L12.5 14.5 L1.5 14.5 Z" fill="#fff" stroke="#606060"/><path d="M2.5 15.5 L13.5 15.5 L13.5 5.5" stroke="#000" fill="none"/><rect x="3" y="4" width="8" height="6" fill="#00f"/><rect x="3" y="10" width="8" height="3" fill="#080"/><path d="M5 5 L9 8" stroke="#f00" stroke-width="1.3"/></svg></div><div class="a" style="left:90px;top:724px;height:16px;line-height:16px;white-space:nowrap;letter-spacing:-0.1px">22 gamejams\e1jam\e1_2.jam</div><div class="a" style="left:54px;top:728px;width:9px;height:9px;border:1px solid #aca899;background:#fff"><svg width="9" height="9" style="position:absolute;left:-1px;top:-1px" shape-rendering="crispEdges"><path d="M2 4.5 H7" stroke="#000"/><path d="M4.5 2 V7" stroke="#000"/></svg></div><div class="a" style="left:64px;top:748px;width:6px;height:1px;background:repeating-linear-gradient(90deg,#a0a0a0 0,#a0a0a0 1px,transparent 1px,transparent 2px)"></div><div class="a" style="left:69px;top:739px;width:16px;height:16px"><svg width="16" height="16" viewBox="0 0 16 16"><path d="M1.5 1.5 L9 1.5 L12.5 5 L12.5 14.5 L1.5 14.5 Z" fill="#fff" stroke="#606060"/><path d="M2.5 15.5 L13.5 15.5 L13.5 5.5" stroke="#000" fill="none"/><rect x="3" y="4" width="8" height="6" fill="#00f"/><rect x="3" y="10" width="8" height="3" fill="#080"/><path d="M5 5 L9 8" stroke="#f00" stroke-width="1.3"/></svg></div><div class="a" style="left:90px;top:740px;height:16px;line-height:16px;white-space:nowrap;letter-spacing:-0.1px">23 gamejams\e1jam\e1_1.jam</div><div class="a" style="left:54px;top:744px;width:9px;height:9px;border:1px solid #aca899;background:#fff"><svg width="9" height="9" style="position:absolute;left:-1px;top:-1px" shape-rendering="crispEdges"><path d="M2 4.5 H7" stroke="#000"/><path d="M4.5 2 V7" stroke="#000"/></svg></div><div class="a" style="left:64px;top:764px;width:6px;height:1px;background:repeating-linear-gradient(90deg,#a0a0a0 0,#a0a0a0 1px,transparent 1px,transparent 2px)"></div><div class="a" style="left:69px;top:755px;width:16px;height:16px"><svg width="16" height="16" viewBox="0 0 16 16"><path d="M1.5 1.5 L9 1.5 L12.5 5 L12.5 14.5 L1.5 14.5 Z" fill="#fff" stroke="#606060"/><path d="M2.5 15.5 L13.5 15.5 L13.5 5.5" stroke="#000" fill="none"/><rect x="3" y="4" width="8" height="6" fill="#00f"/><rect x="3" y="10" width="8" height="3" fill="#080"/><path d="M5 5 L9 8" stroke="#f00" stroke-width="1.3"/></svg></div><div class="a" style="left:90px;top:756px;height:16px;line-height:16px;white-space:nowrap;letter-spacing:-0.1px">24 gamejams\e1jam\adverts2.jam</div><div class="a" style="left:54px;top:760px;width:9px;height:9px;border:1px solid #aca899;background:#fff"><svg width="9" height="9" style="position:absolute;left:-1px;top:-1px" shape-rendering="crispEdges"><path d="M2 4.5 H7" stroke="#000"/><path d="M4.5 2 V7" stroke="#000"/></svg></div><div class="a" style="left:64px;top:780px;width:6px;height:1px;background:repeating-linear-gradient(90deg,#a0a0a0 0,#a0a0a0 1px,transparent 1px,transparent 2px)"></div><div class="a" style="left:69px;top:771px;width:16px;height:16px"><svg width="16" height="16" viewBox="0 0 16 16"><path d="M1.5 1.5 L9 1.5 L12.5 5 L12.5 14.5 L1.5 14.5 Z" fill="#fff" stroke="#606060"/><path d="M2.5 15.5 L13.5 15.5 L13.5 5.5" stroke="#000" fill="none"/><rect x="3" y="4" width="8" height="6" fill="#00f"/><rect x="3" y="10" width="8" height="3" fill="#080"/><path d="M5 5 L9 8" stroke="#f00" stroke-width="1.3"/></svg></div><div class="a" style="left:90px;top:772px;height:16px;line-height:16px;white-space:nowrap;letter-spacing:-0.1px">25 gamejams\e1jam\e1_3.jam</div><div class="a" style="left:54px;top:776px;width:9px;height:9px;border:1px solid #aca899;background:#fff"><svg width="9" height="9" style="position:absolute;left:-1px;top:-1px" shape-rendering="crispEdges"><path d="M2 4.5 H7" stroke="#000"/><path d="M4.5 2 V7" stroke="#000"/></svg></div><div class="a" style="left:64px;top:796px;width:6px;height:1px;background:repeating-linear-gradient(90deg,#a0a0a0 0,#a0a0a0 1px,transparent 1px,transparent 2px)"></div><div class="a" style="left:69px;top:787px;width:16px;height:16px"><svg width="16" height="16" viewBox="0 0 16 16"><path d="M1.5 1.5 L9 1.5 L12.5 5 L12.5 14.5 L1.5 14.5 Z" fill="#fff" stroke="#606060"/><path d="M2.5 15.5 L13.5 15.5 L13.5 5.5" stroke="#000" fill="none"/><rect x="3" y="4" width="8" height="6" fill="#00f"/><rect x="3" y="10" width="8" height="3" fill="#080"/><path d="M5 5 L9 8" stroke="#f00" stroke-width="1.3"/></svg></div><div class="a" style="left:90px;top:788px;height:16px;line-height:16px;white-space:nowrap;letter-spacing:-0.1px">26 gamejams\e1jam\t_monsp1.jam</div><div class="a" style="left:54px;top:792px;width:9px;height:9px;border:1px solid #aca899;background:#fff"><svg width="9" height="9" style="position:absolute;left:-1px;top:-1px" shape-rendering="crispEdges"><path d="M2 4.5 H7" stroke="#000"/><path d="M4.5 2 V7" stroke="#000"/></svg></div><div class="a" style="left:64px;top:812px;width:6px;height:1px;background:repeating-linear-gradient(90deg,#a0a0a0 0,#a0a0a0 1px,transparent 1px,transparent 2px)"></div><div class="a" style="left:69px;top:803px;width:16px;height:16px"><svg width="16" height="16" viewBox="0 0 16 16"><path d="M1.5 1.5 L9 1.5 L12.5 5 L12.5 14.5 L1.5 14.5 Z" fill="#fff" stroke="#606060"/><path d="M2.5 15.5 L13.5 15.5 L13.5 5.5" stroke="#000" fill="none"/><rect x="3" y="4" width="8" height="6" fill="#00f"/><rect x="3" y="10" width="8" height="3" fill="#080"/><path d="M5 5 L9 8" stroke="#f00" stroke-width="1.3"/></svg></div><div class="a" style="left:90px;top:804px;height:16px;line-height:16px;white-space:nowrap;letter-spacing:-0.1px">27 gamejams\e1jam\116_32.jam</div><div class="a" style="left:54px;top:808px;width:9px;height:9px;border:1px solid #aca899;background:#fff"><svg width="9" height="9" style="position:absolute;left:-1px;top:-1px" shape-rendering="crispEdges"><path d="M2 4.5 H7" stroke="#000"/><path d="M4.5 2 V7" stroke="#000"/></svg></div><div class="a" style="left:630px;top:188px;width:560px;height:588px;background:#74748f;border-radius:7px 7px 0 0"></div><div class="a" style="left:631px;top:189px;width:560px;height:586px;background:#fff;border-radius:6px 6px 0 0"></div><div class="a" style="left:632px;top:190px;width:560px;height:584px;background:#7878a0;border-radius:5px 5px 0 0"></div><div class="a" style="left:632px;top:190px;width:560px;height:26px;border-radius:5px 5px 0 0;background:linear-gradient(#fff 0,#fff 1px,#a9a8c2 3px,#b4b4ca 8px,#c2c4d2 12px,#dcdce6 17px,#f4f4f8 22px,#fff 24px,#e0e0dc 26px)"></div><div class="a" style="left:634px;top:218px;width:560px;height:553px;background:#f0f0e8"></div><div class="a" style="left:635px;top:219px;width:560px;height:551px;background:#6a6a6a"></div><div class="a" style="left:636px;top:220px;width:560px;height:534px;background:#fff"></div><div class="a" style="left:632px;top:774px;width:560px;height:1px;background:#fff"></div><div class="a" style="left:636px;top:196px;width:16px;height:16px"><svg width="16" height="16" shape-rendering="crispEdges"><path d="M0.5 0.5 H10 L14.5 5 V15.5 H0.5 Z" fill="#fff" stroke="#000"/><path d="M10 0.5 V5 H14.5" fill="none" stroke="#000"/><rect x="2" y="7" width="11" height="6" fill="#000"/><path d="M2 7.5 H13 M2 12.5 H13" stroke="#f00" stroke-dasharray="1 1"/><path d="M3 10 H5 M6 10 H8 M9 10 H11" stroke="#fff"/></svg></div><div class="a" style="left:655px;top:197px;font:bold 14px 'Liberation Sans', sans-serif;white-space:nowrap;transform:scaleX(0.9);transform-origin:0 0">ZZ-E1.DAT</div><div class="a" style="left:636px;top:754px;width:560px;height:16px;background:#fbfbf8"></div><div class="a" style="left:637px;top:754px;width:16px;height:16px;border:1px solid #a4a4bc;border-radius:2px;background:linear-gradient(#fff,#dcdce6 60%,#c4c4d4)"><svg width="14" height="14" style="position:absolute;left:0;top:0"><path d="M8.5 3.5 L5 7 L8.5 10.5" stroke="#4d4d4d" stroke-width="2" fill="none"/></svg></div><div class="a" style="left:653px;top:754px;width:560px;height:16px;border:1px solid #9a9aae;border-radius:2px;background:linear-gradient(#f4f4f8,#e6e6ee 40%,#c8c8da)"></div><div class="a" style="left:927px;top:758px;width:1px;height:7px;background:#8c8ca0;box-shadow:1px 0 #fff"></div><div class="a" style="left:929px;top:758px;width:1px;height:7px;background:#8c8ca0;box-shadow:1px 0 #fff"></div><div class="a" style="left:931px;top:758px;width:1px;height:7px;background:#8c8ca0;box-shadow:1px 0 #fff"></div><div class="a" style="left:933px;top:758px;width:1px;height:7px;background:#8c8ca0;box-shadow:1px 0 #fff"></div><div class="a" style="left:636px;top:220px;width:536px;height:534px;overflow:hidden"><div class="a" style="left:-636px;top:-220px;width:1172px;height:819px"><svg class="a" style="left:0;top:0" width="1172" height="819" viewBox="0 0 1172 819"><path d="M1091.2 463.7 L1098.9 463.2 L1103.8 467.6 L1105.5 473.0 L1103.3 481.9 L1096.7 487.9 L1093.4 487.9 L1083.5 485.2 L1091.2 477.5 L1093.4 472.0 L1089.0 465.4Z" fill="#ffff00" stroke="#9a9a9a" stroke-width="0.8" stroke-linejoin="round"/><path d="M992.7 522.7 L1003.0 525.6 L991.3 542.5 L989.0 552.7 L978.8 552.7 L979.6 542.5 L984.0 530.8Z" fill="#ffff00" stroke="#9a9a9a" stroke-width="0.8" stroke-linejoin="round"/><path d="M990.5 552.7 L994.2 555.7 L994.2 567.4 L989.8 582.0 L982.5 593.8 L975.2 597.4 L969.3 595.2 L978.1 588.0 L986.9 573.3Z" fill="#ffff00" stroke="#9a9a9a" stroke-width="0.8" stroke-linejoin="round"/><path d="M969.3 593.8 L962.0 595.2 L954.7 598.2 L951.0 605.5 L950.5 610.8 L954.5 621.5 L962.6 629.6 L970.6 633.0 L975.3 633.0 L975.3 625.5 L966.6 622.8 L959.9 616.1 L958.5 608.0 L959.5 601.0 L963.4 597.6Z" fill="#ffff00" stroke="#9a9a9a" stroke-width="0.8" stroke-linejoin="round"/><path d="M898.7 632.3 L904.8 632.3 L906.1 639.0 L906.1 647.0 L909.5 655.0 L907.5 656.5 L901.4 651.0 L897.4 640.3Z" fill="#ffff00" stroke="#9a9a9a" stroke-width="0.8" stroke-linejoin="round"/><path d="M981.4 622.8 L992.2 622.8 L1000.2 631.0 L1003.6 644.4 L1001.6 659.0 L997.5 664.5 L992.2 660.5 L996.2 644.4 L992.2 632.3 L984.0 625.5Z" fill="#ffff00" stroke="#9a9a9a" stroke-width="0.8" stroke-linejoin="round"/><path d="M955.9 684.7 L965.3 690.0 L974.7 690.0 L978.7 690.0 L977.4 700.8 L974.7 702.8 L965.3 699.5 L954.5 692.7Z" fill="#ffff00" stroke="#9a9a9a" stroke-width="0.8" stroke-linejoin="round"/><path d="M689.3 518.0 L693.2 522.5 L686.4 529.3 L680.5 537.1 L678.0 546.0 L677.1 559.6 L674.7 559.6 L672.7 547.0 L674.7 537.1 L679.5 528.3 L685.4 521.5Z" fill="#ffff00" stroke="#9a9a9a" stroke-width="0.8" stroke-linejoin="round"/><path d="M738.7 551.9 L745.0 547.1 L753.0 547.9 L757.8 552.7 L759.4 560.6 L756.2 557.5 L749.8 555.0 L740.3 555.0Z" fill="#ffff00" stroke="#9a9a9a" stroke-width="0.8" stroke-linejoin="round"/><path d="M754.6 570.2 L757.8 565.4 L761.0 574.9 L766.5 580.5 L775.2 581.3 L776.8 582.9 L768.9 588.4 L765.7 589.2 L756.2 581.3 L753.8 576.5Z" fill="#ffff00" stroke="#9a9a9a" stroke-width="0.8" stroke-linejoin="round"/><path d="M708.6 603.5 L711.7 608.3 L718.1 612.2 L730.8 614.6 L730.8 617.8 L727.6 620.2 L718.1 621.0 L711.7 617.8 L707.8 611.4Z" fill="#ffff00" stroke="#9a9a9a" stroke-width="0.8" stroke-linejoin="round"/><path d="M732.4 613.8 L740.3 612.2 L746.7 617.8 L752.2 630.5 L751.4 640.0 L746.7 646.3 L740.3 649.5 L730.8 647.9 L727.6 644.8 L738.7 641.6 L743.5 635.2 L743.5 625.7 L738.7 619.4Z" fill="#ffff00" stroke="#9a9a9a" stroke-width="0.8" stroke-linejoin="round"/><path d="M689.5 644.8 L694.3 641.6 L700.6 649.5 L708.6 653.5 L716.5 651.1 L721.3 649.5 L719.7 656.7 L711.7 660.6 L702.2 659.0 L692.7 652.7Z" fill="#ffff00" stroke="#9a9a9a" stroke-width="0.8" stroke-linejoin="round"/><path d="M826.4 561.7 L833.7 555.2 L839.5 553.7 L843.8 556.6 L846.7 561.7 L840.9 560.7 L835.1 561.0Z" fill="#ffff00" stroke="#9a9a9a" stroke-width="0.8" stroke-linejoin="round"/><path d="M893.1 563.1 L897.5 559.5 L906.2 558.8 L910.5 561.7 L917.8 569.7 L910.5 565.3 L903.3 564.6 L897.5 568.2Z" fill="#ffff00" stroke="#9a9a9a" stroke-width="0.8" stroke-linejoin="round"/><path d="M991.0 529.0 L1004.5 526.0 L997.0 540.0 L992.0 552.0 L989.0 552.0 L990.0 545.0Z" fill="#ff0000"/><path d="M978.8 552.7 L988.4 552.7 L986.9 567.4 L984.0 576.2 L981.8 573.3 L980.3 561.5Z" fill="#ff0000"/><path d="M992.2 661.0 L997.5 664.5 L977.4 689.4 L974.0 687.4Z" fill="#ff0000"/><path d="M908.8 655.0 L912.2 654.4 L957.2 684.0 L953.2 692.7 L934.4 679.3Z" fill="#ff0000"/><path d="M689.3 518.0 L703.0 514.2 L693.2 523.0Z" fill="#ff0000"/><path d="M892.4 563.9 L897.5 568.2 L890.2 575.5Z" fill="#ff0000"/><path d="M975.3 625.5 L978.7 625.5 L978.7 632.3 L975.3 632.3Z" fill="#ff0000"/><path d="M689.0 641.0 L695.0 641.0 L692.0 646.0Z" fill="#ff0000"/><path d="M882 469.5 L889 476.8 L936.5 476.8 L946.8 476.3 L966 470.8 L966 469 Z" fill="#c0c0c0"/><path d="M889 476.8 H936.5" stroke="#909090" stroke-width="1"/><path d="M840 472.5 L856 472 L859 474 L864 476.2 L868 476.2 L872 474.3 L877 471.2 L882 470.8 L889 476.8 M936.5 476.5 L946.8 476 L966 470.5" fill="none" stroke="#f00" stroke-width="1.2"/><path d="M841 471 L848 471 L852 469.5 L857 471 L863 474 L869 474 L874 472.5 L882 471" fill="none" stroke="#a0a0a0" stroke-width="1"/><path d="M822.0 467.0 C828.3 466.9 837.0 467.0 850.0 467.0 C863.0 467.0 881.7 467.0 900.0 467.0 C918.3 467.0 936.7 467.0 960.0 467.0 C983.3 467.0 1019.0 467.0 1040.0 467.0 C1061.0 467.0 1077.5 466.6 1086.0 467.0 C1094.5 467.4 1090.4 468.2 1091.0 469.5 C1091.6 470.8 1090.7 473.2 1089.5 475.0 C1088.3 476.8 1095.6 473.3 1084.0 480.5 C1072.4 487.7 1033.3 510.3 1020.0 518.3 C1006.7 526.3 1008.2 525.3 1004.0 528.5 C999.8 531.7 997.2 534.4 995.0 537.5 C992.8 540.6 991.4 543.5 990.5 547.0 C989.6 550.5 990.4 554.5 989.8 558.6 C989.2 562.7 988.4 567.9 986.9 571.8 C985.4 575.7 983.5 578.8 981.0 582.0 C978.5 585.2 975.4 587.9 972.2 590.8 C969.0 593.7 964.2 596.7 962.0 599.6 C959.8 602.5 959.1 605.6 959.0 608.4 C958.9 611.1 959.7 613.7 961.2 616.1 C962.7 618.5 965.3 621.4 968.0 622.8 C970.7 624.1 974.7 623.8 977.4 624.2 C980.1 624.7 981.8 624.1 984.0 625.5 C986.2 626.9 989.0 629.1 990.8 632.3 C992.6 635.4 994.3 640.4 994.8 644.4 C995.2 648.4 995.3 651.8 993.5 656.5 C991.7 661.2 987.1 667.5 984.0 672.6 C980.9 677.8 976.9 684.7 974.7 687.4 C972.5 690.1 976.9 691.9 970.6 688.7 C964.3 685.6 947.1 674.5 937.0 668.5 C926.9 662.5 915.5 656.2 910.2 652.4 C905.0 648.6 906.4 647.9 905.5 645.7 C904.6 643.5 904.5 641.1 904.8 639.0 C905.1 636.9 905.9 634.4 907.5 633.0 C909.1 631.6 912.3 631.7 914.2 630.9 C916.1 630.1 918.2 629.8 918.9 628.2 C919.6 626.6 917.6 623.2 918.2 621.5 C918.8 619.8 919.8 619.0 922.3 618.1 C924.8 617.2 930.4 617.3 933.0 616.1 C935.6 614.9 937.0 613.0 937.7 610.8 C938.5 608.6 938.1 606.5 937.5 603.0 C936.9 599.5 935.6 593.6 933.8 590.0 C932.0 586.4 929.4 584.4 926.5 581.3 C923.6 578.1 919.8 573.6 916.4 571.1 C913.0 568.6 909.1 566.7 906.2 566.0 C903.3 565.3 901.6 565.6 898.9 566.8 C896.2 568.0 893.1 571.6 890.2 573.3 C887.3 575.0 884.9 576.3 881.5 576.9 C878.1 577.5 873.8 577.5 869.9 576.9 C866.0 576.3 861.7 575.0 858.3 573.3 C854.9 571.6 852.5 568.7 849.6 566.8 C846.7 564.9 843.8 562.3 840.9 561.7 C838.0 561.1 835.1 562.5 832.2 563.1 C829.3 563.7 826.9 565.3 823.5 565.3 C820.1 565.3 815.5 563.6 811.9 563.1 C808.3 562.6 805.2 561.3 801.8 562.4 C798.4 563.5 795.2 567.2 791.6 569.7 C788.0 572.2 782.7 575.8 780.0 577.6 C777.3 579.4 777.6 580.1 775.2 580.5 C772.8 580.9 768.1 580.8 765.7 579.7 C763.3 578.6 762.2 576.8 761.0 574.1 C759.8 571.5 759.9 566.7 758.6 563.8 C757.3 560.9 755.5 558.2 753.0 556.7 C750.5 555.2 746.9 554.9 743.5 555.0 C740.1 555.1 735.8 555.8 732.4 557.5 C729.0 559.2 725.8 562.2 722.9 565.4 C720.0 568.6 717.1 572.8 715.0 576.5 C712.9 580.2 711.0 583.6 710.2 587.6 C709.4 591.6 709.7 596.8 710.2 600.3 C710.7 603.8 711.4 606.3 713.3 608.3 C715.1 610.3 718.4 611.0 721.3 612.2 C724.2 613.4 727.9 614.2 730.8 615.4 C733.7 616.6 736.6 617.7 738.7 619.4 C740.8 621.1 742.7 623.3 743.5 625.7 C744.3 628.1 744.3 631.3 743.5 633.7 C742.7 636.1 740.8 638.7 738.7 640.0 C736.6 641.3 733.4 640.8 730.8 641.6 C728.2 642.4 725.3 643.3 722.9 644.8 C720.5 646.2 718.9 649.0 716.5 650.3 C714.1 651.6 711.2 653.1 708.6 652.7 C706.0 652.3 703.0 650.9 700.6 648.0 C698.2 645.1 696.7 642.6 694.3 635.2 C691.9 627.8 688.4 615.4 686.3 603.5 C684.2 591.6 682.7 572.6 681.6 563.8 C680.5 555.0 679.7 554.6 679.5 550.8 C679.3 547.0 679.7 544.1 680.5 541.0 C681.3 537.9 682.4 535.1 684.4 532.3 C686.4 529.5 689.0 526.8 692.3 524.0 C695.6 521.2 699.1 519.4 704.0 515.6 C708.9 511.8 715.8 505.7 721.4 501.4 C727.0 497.1 733.7 492.6 737.8 490.0 C741.9 487.4 738.5 488.9 746.0 486.0 C753.5 483.1 773.3 475.7 782.9 472.8 C792.5 469.9 798.5 469.7 803.4 468.8 C808.2 467.9 808.9 467.9 812.0 467.6 C815.1 467.3 815.7 467.1 822.0 467.0Z" fill="none" stroke="#b06060" stroke-width="5.6" stroke-linejoin="round"/><path d="M822.0 467.0 C828.3 466.9 837.0 467.0 850.0 467.0 C863.0 467.0 881.7 467.0 900.0 467.0 C918.3 467.0 936.7 467.0 960.0 467.0 C983.3 467.0 1019.0 467.0 1040.0 467.0 C1061.0 467.0 1077.5 466.6 1086.0 467.0 C1094.5 467.4 1090.4 468.2 1091.0 469.5 C1091.6 470.8 1090.7 473.2 1089.5 475.0 C1088.3 476.8 1095.6 473.3 1084.0 480.5 C1072.4 487.7 1033.3 510.3 1020.0 518.3 C1006.7 526.3 1008.2 525.3 1004.0 528.5 C999.8 531.7 997.2 534.4 995.0 537.5 C992.8 540.6 991.4 543.5 990.5 547.0 C989.6 550.5 990.4 554.5 989.8 558.6 C989.2 562.7 988.4 567.9 986.9 571.8 C985.4 575.7 983.5 578.8 981.0 582.0 C978.5 585.2 975.4 587.9 972.2 590.8 C969.0 593.7 964.2 596.7 962.0 599.6 C959.8 602.5 959.1 605.6 959.0 608.4 C958.9 611.1 959.7 613.7 961.2 616.1 C962.7 618.5 965.3 621.4 968.0 622.8 C970.7 624.1 974.7 623.8 977.4 624.2 C980.1 624.7 981.8 624.1 984.0 625.5 C986.2 626.9 989.0 629.1 990.8 632.3 C992.6 635.4 994.3 640.4 994.8 644.4 C995.2 648.4 995.3 651.8 993.5 656.5 C991.7 661.2 987.1 667.5 984.0 672.6 C980.9 677.8 976.9 684.7 974.7 687.4 C972.5 690.1 976.9 691.9 970.6 688.7 C964.3 685.6 947.1 674.5 937.0 668.5 C926.9 662.5 915.5 656.2 910.2 652.4 C905.0 648.6 906.4 647.9 905.5 645.7 C904.6 643.5 904.5 641.1 904.8 639.0 C905.1 636.9 905.9 634.4 907.5 633.0 C909.1 631.6 912.3 631.7 914.2 630.9 C916.1 630.1 918.2 629.8 918.9 628.2 C919.6 626.6 917.6 623.2 918.2 621.5 C918.8 619.8 919.8 619.0 922.3 618.1 C924.8 617.2 930.4 617.3 933.0 616.1 C935.6 614.9 937.0 613.0 937.7 610.8 C938.5 608.6 938.1 606.5 937.5 603.0 C936.9 599.5 935.6 593.6 933.8 590.0 C932.0 586.4 929.4 584.4 926.5 581.3 C923.6 578.1 919.8 573.6 916.4 571.1 C913.0 568.6 909.1 566.7 906.2 566.0 C903.3 565.3 901.6 565.6 898.9 566.8 C896.2 568.0 893.1 571.6 890.2 573.3 C887.3 575.0 884.9 576.3 881.5 576.9 C878.1 577.5 873.8 577.5 869.9 576.9 C866.0 576.3 861.7 575.0 858.3 573.3 C854.9 571.6 852.5 568.7 849.6 566.8 C846.7 564.9 843.8 562.3 840.9 561.7 C838.0 561.1 835.1 562.5 832.2 563.1 C829.3 563.7 826.9 565.3 823.5 565.3 C820.1 565.3 815.5 563.6 811.9 563.1 C808.3 562.6 805.2 561.3 801.8 562.4 C798.4 563.5 795.2 567.2 791.6 569.7 C788.0 572.2 782.7 575.8 780.0 577.6 C777.3 579.4 777.6 580.1 775.2 580.5 C772.8 580.9 768.1 580.8 765.7 579.7 C763.3 578.6 762.2 576.8 761.0 574.1 C759.8 571.5 759.9 566.7 758.6 563.8 C757.3 560.9 755.5 558.2 753.0 556.7 C750.5 555.2 746.9 554.9 743.5 555.0 C740.1 555.1 735.8 555.8 732.4 557.5 C729.0 559.2 725.8 562.2 722.9 565.4 C720.0 568.6 717.1 572.8 715.0 576.5 C712.9 580.2 711.0 583.6 710.2 587.6 C709.4 591.6 709.7 596.8 710.2 600.3 C710.7 603.8 711.4 606.3 713.3 608.3 C715.1 610.3 718.4 611.0 721.3 612.2 C724.2 613.4 727.9 614.2 730.8 615.4 C733.7 616.6 736.6 617.7 738.7 619.4 C740.8 621.1 742.7 623.3 743.5 625.7 C744.3 628.1 744.3 631.3 743.5 633.7 C742.7 636.1 740.8 638.7 738.7 640.0 C736.6 641.3 733.4 640.8 730.8 641.6 C728.2 642.4 725.3 643.3 722.9 644.8 C720.5 646.2 718.9 649.0 716.5 650.3 C714.1 651.6 711.2 653.1 708.6 652.7 C706.0 652.3 703.0 650.9 700.6 648.0 C698.2 645.1 696.7 642.6 694.3 635.2 C691.9 627.8 688.4 615.4 686.3 603.5 C684.2 591.6 682.7 572.6 681.6 563.8 C680.5 555.0 679.7 554.6 679.5 550.8 C679.3 547.0 679.7 544.1 680.5 541.0 C681.3 537.9 682.4 535.1 684.4 532.3 C686.4 529.5 689.0 526.8 692.3 524.0 C695.6 521.2 699.1 519.4 704.0 515.6 C708.9 511.8 715.8 505.7 721.4 501.4 C727.0 497.1 733.7 492.6 737.8 490.0 C741.9 487.4 738.5 488.9 746.0 486.0 C753.5 483.1 773.3 475.7 782.9 472.8 C792.5 469.9 798.5 469.7 803.4 468.8 C808.2 467.9 808.9 467.9 812.0 467.6 C815.1 467.3 815.7 467.1 822.0 467.0Z" fill="none" stroke="#ff0000" stroke-width="5.1" stroke-linejoin="round"/><path d="M822.0 467.0 C828.3 466.9 837.0 467.0 850.0 467.0 C863.0 467.0 881.7 467.0 900.0 467.0 C918.3 467.0 936.7 467.0 960.0 467.0 C983.3 467.0 1019.0 467.0 1040.0 467.0 C1061.0 467.0 1077.5 466.6 1086.0 467.0 C1094.5 467.4 1090.4 468.2 1091.0 469.5 C1091.6 470.8 1090.7 473.2 1089.5 475.0 C1088.3 476.8 1095.6 473.3 1084.0 480.5 C1072.4 487.7 1033.3 510.3 1020.0 518.3 C1006.7 526.3 1008.2 525.3 1004.0 528.5 C999.8 531.7 997.2 534.4 995.0 537.5 C992.8 540.6 991.4 543.5 990.5 547.0 C989.6 550.5 990.4 554.5 989.8 558.6 C989.2 562.7 988.4 567.9 986.9 571.8 C985.4 575.7 983.5 578.8 981.0 582.0 C978.5 585.2 975.4 587.9 972.2 590.8 C969.0 593.7 964.2 596.7 962.0 599.6 C959.8 602.5 959.1 605.6 959.0 608.4 C958.9 611.1 959.7 613.7 961.2 616.1 C962.7 618.5 965.3 621.4 968.0 622.8 C970.7 624.1 974.7 623.8 977.4 624.2 C980.1 624.7 981.8 624.1 984.0 625.5 C986.2 626.9 989.0 629.1 990.8 632.3 C992.6 635.4 994.3 640.4 994.8 644.4 C995.2 648.4 995.3 651.8 993.5 656.5 C991.7 661.2 987.1 667.5 984.0 672.6 C980.9 677.8 976.9 684.7 974.7 687.4 C972.5 690.1 976.9 691.9 970.6 688.7 C964.3 685.6 947.1 674.5 937.0 668.5 C926.9 662.5 915.5 656.2 910.2 652.4 C905.0 648.6 906.4 647.9 905.5 645.7 C904.6 643.5 904.5 641.1 904.8 639.0 C905.1 636.9 905.9 634.4 907.5 633.0 C909.1 631.6 912.3 631.7 914.2 630.9 C916.1 630.1 918.2 629.8 918.9 628.2 C919.6 626.6 917.6 623.2 918.2 621.5 C918.8 619.8 919.8 619.0 922.3 618.1 C924.8 617.2 930.4 617.3 933.0 616.1 C935.6 614.9 937.0 613.0 937.7 610.8 C938.5 608.6 938.1 606.5 937.5 603.0 C936.9 599.5 935.6 593.6 933.8 590.0 C932.0 586.4 929.4 584.4 926.5 581.3 C923.6 578.1 919.8 573.6 916.4 571.1 C913.0 568.6 909.1 566.7 906.2 566.0 C903.3 565.3 901.6 565.6 898.9 566.8 C896.2 568.0 893.1 571.6 890.2 573.3 C887.3 575.0 884.9 576.3 881.5 576.9 C878.1 577.5 873.8 577.5 869.9 576.9 C866.0 576.3 861.7 575.0 858.3 573.3 C854.9 571.6 852.5 568.7 849.6 566.8 C846.7 564.9 843.8 562.3 840.9 561.7 C838.0 561.1 835.1 562.5 832.2 563.1 C829.3 563.7 826.9 565.3 823.5 565.3 C820.1 565.3 815.5 563.6 811.9 563.1 C808.3 562.6 805.2 561.3 801.8 562.4 C798.4 563.5 795.2 567.2 791.6 569.7 C788.0 572.2 782.7 575.8 780.0 577.6 C777.3 579.4 777.6 580.1 775.2 580.5 C772.8 580.9 768.1 580.8 765.7 579.7 C763.3 578.6 762.2 576.8 761.0 574.1 C759.8 571.5 759.9 566.7 758.6 563.8 C757.3 560.9 755.5 558.2 753.0 556.7 C750.5 555.2 746.9 554.9 743.5 555.0 C740.1 555.1 735.8 555.8 732.4 557.5 C729.0 559.2 725.8 562.2 722.9 565.4 C720.0 568.6 717.1 572.8 715.0 576.5 C712.9 580.2 711.0 583.6 710.2 587.6 C709.4 591.6 709.7 596.8 710.2 600.3 C710.7 603.8 711.4 606.3 713.3 608.3 C715.1 610.3 718.4 611.0 721.3 612.2 C724.2 613.4 727.9 614.2 730.8 615.4 C733.7 616.6 736.6 617.7 738.7 619.4 C740.8 621.1 742.7 623.3 743.5 625.7 C744.3 628.1 744.3 631.3 743.5 633.7 C742.7 636.1 740.8 638.7 738.7 640.0 C736.6 641.3 733.4 640.8 730.8 641.6 C728.2 642.4 725.3 643.3 722.9 644.8 C720.5 646.2 718.9 649.0 716.5 650.3 C714.1 651.6 711.2 653.1 708.6 652.7 C706.0 652.3 703.0 650.9 700.6 648.0 C698.2 645.1 696.7 642.6 694.3 635.2 C691.9 627.8 688.4 615.4 686.3 603.5 C684.2 591.6 682.7 572.6 681.6 563.8 C680.5 555.0 679.7 554.6 679.5 550.8 C679.3 547.0 679.7 544.1 680.5 541.0 C681.3 537.9 682.4 535.1 684.4 532.3 C686.4 529.5 689.0 526.8 692.3 524.0 C695.6 521.2 699.1 519.4 704.0 515.6 C708.9 511.8 715.8 505.7 721.4 501.4 C727.0 497.1 733.7 492.6 737.8 490.0 C741.9 487.4 738.5 488.9 746.0 486.0 C753.5 483.1 773.3 475.7 782.9 472.8 C792.5 469.9 798.5 469.7 803.4 468.8 C808.2 467.9 808.9 467.9 812.0 467.6 C815.1 467.3 815.7 467.1 822.0 467.0Z" fill="none" stroke="#b8bcbc" stroke-width="2.0" stroke-linejoin="round"/><path d="M822 466.8 L1086 466.8" stroke="#f00" stroke-width="6"/><path d="M822 467.3 L1086 467.3" stroke="#b8bcbc" stroke-width="2.6"/><path d="M665.5 562.6 L679 562.6" stroke="#f00" stroke-width="3"/><path d="M667 562.6 L679 562.6" stroke="#b8bcbc" stroke-width="1.2"/><rect x="934.2" y="463" width="2.6" height="10" rx="1.2" fill="#000"/><rect x="936.8" y="464" width="28" height="1.2" fill="#000"/><path d="M938.3 456 L938.3 462.7" stroke="#000" stroke-width="1.3"/><g shape-rendering="crispEdges"><path d="M935 448 H938 L940 449 V448 H943 L946 449 L947 451 L948 453 L950 455 V458 H946 L944 456 L941 456 L939 457 L937 456 L936 452 Z" fill="#000"/><rect x="937.5" y="451" width="2.5" height="2" fill="#fff"/><rect x="943" y="451.5" width="2" height="2.5" fill="#fff"/><rect x="946" y="455" width="3" height="2" fill="#fff"/></g></svg></div></div></body></html>
